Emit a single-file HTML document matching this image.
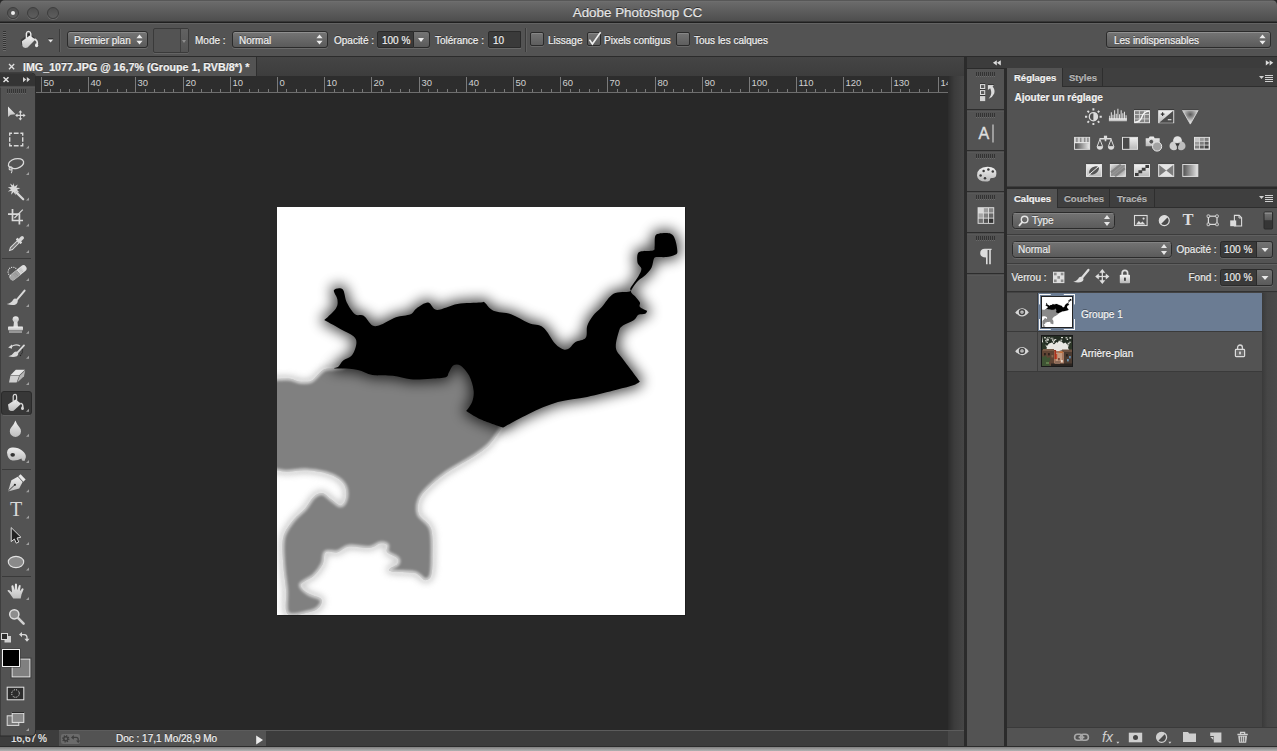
<!DOCTYPE html>
<html lang="fr">
<head>
<meta charset="utf-8">
<title>Adobe Photoshop CC</title>
<style>
*{box-sizing:border-box;margin:0;padding:0}
html,body{width:1277px;height:751px;overflow:hidden;background:#282828}
body{position:relative;font-family:"Liberation Sans",sans-serif;font-size:10px;color:#ececec}
.a{position:absolute}
.t{position:absolute;white-space:nowrap;font-size:10px;line-height:14px;color:#f0f0f0;text-shadow:0 -1px 0 rgba(0,0,0,.4);-webkit-text-stroke:.2px #f0f0f0}
#title{left:0;top:0;width:1277px;height:23px;background:linear-gradient(#3c3c3c 0,#727272 1px,#6a6a6a 2px,#5e5e5e 10px,#4e4e4e 21px,#1f1f1f 22px);border-radius:5px 5px 0 0}
#title .tt{left:-1px;width:1277px;top:4.7px;text-align:center;font-size:13.4px;line-height:16px;color:#e6e6e6;text-shadow:0 -1px 0 rgba(0,0,0,.5);-webkit-text-stroke:.2px #e6e6e6}
.tl{position:absolute;top:7px;width:12px;height:12px;border-radius:50%;background:linear-gradient(#4e4e4e,#5e5e5e);border:1px solid #3d3d3d;box-shadow:0 1px 0 rgba(255,255,255,.14)}
#opts{left:0;top:23px;width:1277px;height:34px;background:#535353;border-top:1px solid #636363;border-bottom:1px solid #2b2b2b}
.dd{position:absolute;height:17px;border:1px solid #2b2b2b;border-radius:3px;background:linear-gradient(#757575,#5a5a5a);box-shadow:0 1px 0 rgba(255,255,255,.14),inset 0 1px 0 rgba(255,255,255,.2)}
.dd .t{top:1.5px;left:6px}
.ud{position:absolute;right:4px;top:2px;width:7px;height:11px}
.inp{position:absolute;height:17px;border:1px solid #2a2a2a;border-radius:2px 0 0 2px;background:#3a3a3a;box-shadow:0 1px 0 rgba(255,255,255,.13)}
.inp .t{top:1.5px;left:4px}
.ab{position:absolute;height:17px;width:16px;border:1px solid #2a2a2a;border-left:0;border-radius:0 3px 3px 0;background:linear-gradient(#757575,#5a5a5a);box-shadow:0 1px 0 rgba(255,255,255,.13)}
.ab:after{content:"";position:absolute;left:4px;top:6px;border:3.5px solid transparent;border-top:4px solid #ececec;border-bottom:0}
.cb{position:absolute;width:14px;height:14px;border:1px solid #2b2b2b;border-radius:2px;background:linear-gradient(#747474,#5e5e5e);box-shadow:0 1px 0 rgba(255,255,255,.13),inset 0 1px 0 rgba(255,255,255,.15)}
.vsep{position:absolute;width:2px;border-left:1px solid #3a3a3a;border-right:1px solid #606060}
#tabs{left:0;top:57px;width:965px;height:19px;background:linear-gradient(#454545,#3d3d3d)}
#tab1{left:0;top:0;width:257px;height:19px;background:#535353;border-right:1px solid #2e2e2e}
#cv{left:36px;top:93px;width:912px;height:637px;background:#282828}
#gap{left:948px;top:76px;width:16px;height:654px;background:linear-gradient(90deg,#2c2c2c,#3c3c3c 40%,#464646)}
#status{left:0;top:730px;width:965px;height:17px;background:#535353;border-top:1px solid #5c5c5c}
#botline{left:0;top:746px;width:1277px;height:5px;background:linear-gradient(#2c2c2c 0,#2c2c2c 1px,#858585 1.5px,#b2b2b2 100%)}
</style>
</head>
<body>
<div id="title" class="a">
  <div class="tl" style="left:7px"></div><div class="tl" style="left:27px"></div><div class="tl" style="left:47px"></div>
  <div class="a" style="left:11px;top:11px;width:4px;height:4px;border-radius:50%;background:#eee"></div>
  <div class="t tt">Adobe Photoshop CC</div>
</div>

<div id="opts" class="a">
  <svg class="a" style="left:0;top:0" width="70" height="34" viewBox="0 23 70 34">
    <path d="M3,30.5h3M3,32.5h3M3,34.5h3M3,36.5h3M3,38.5h3M3,40.5h3M3,42.5h3M3,44.5h3M3,46.5h3M3,48.5h3" stroke="#333" stroke-width="1"/>
    <path d="M3,31.5h3M3,33.5h3M3,35.5h3M3,37.5h3M3,39.5h3M3,41.5h3M3,43.5h3M3,45.5h3M3,47.5h3M3,49.5h3" stroke="#6a6a6a" stroke-width="1"/>
    <defs><linearGradient id="ob" x1="0" y1="0" x2="0" y2="1"><stop offset="0" stop-color="#f2f2f2"/><stop offset="1" stop-color="#c4c4c4"/></linearGradient></defs>
    <path d="M21.4,39.6L29.6,33.6L35.2,37.4L27.6,45.6Q23.6,46.6 22,44Z" fill="#2a2a2a" opacity=".6" transform="translate(-.6 -.8)"/>
    <path d="M21.9,40.2L29.8,34.6L35.4,38.4L27.6,46.6Q23.8,47.8 22.4,45Z" fill="url(#ob)"/>
    <path d="M26.4,37.6V32.4Q26.8,30.4 28.6,30.4Q30.6,30.6 30.8,32.8V39.4" fill="none" stroke="#ececec" stroke-width="1.4"/>
    <path d="M27.4,33.4l2,-1.2v2.4z" fill="#222"/>
    <path d="M34.6,38Q37.6,39.4 37.4,43" fill="none" stroke="#e4e4e4" stroke-width="1.5"/><ellipse cx="36.6" cy="44.2" rx="1.6" ry="2" fill="#e8e8e8"/>
    <path d="M48,38.4h5.2l-2.6,3.2z" fill="#e6e6e6"/><path d="M48,37.6h5.2" stroke="#333" stroke-width="1"/>
    <path d="M59.5,28V51" stroke="#3a3a3a" stroke-width="1"/><path d="M60.5,28V51" stroke="#5e5e5e" stroke-width="1"/>
  </svg>
  <div class="dd" style="left:67px;top:7px;width:81px"><span class="t">Premier plan</span><svg class="ud" viewBox="0 0 7 11"><path d="M.4,4.2L3.5,.4L6.6,4.2zM.4,6.8L3.5,10.6L6.6,6.8z" fill="#ececec"/></svg></div>
  <div class="a" style="left:153px;top:4px;width:36px;height:25px;border:1px solid #3a3a3a;border-radius:2px;box-shadow:0 1px 0 rgba(255,255,255,.1)"><div class="a" style="left:26px;top:0;width:1px;height:23px;background:#3f3f3f"></div><div class="a" style="left:27px;top:0;width:7px;height:23px;background:linear-gradient(#626262,#545454)"></div><div class="a" style="left:28px;top:11px;border:2.5px solid transparent;border-top:3px solid #8e8e8e;border-bottom:0"></div></div>
  <div class="t" style="left:195px;top:10px">Mode :</div>
  <div class="dd" style="left:232px;top:7px;width:96px"><span class="t">Normal</span><svg class="ud" viewBox="0 0 7 11"><path d="M.4,4.2L3.5,.4L6.6,4.2zM.4,6.8L3.5,10.6L6.6,6.8z" fill="#ececec"/></svg></div>
  <div class="t" style="left:334px;top:10px">Opacité :</div>
  <div class="inp" style="left:377px;top:7px;width:37px"><span class="t">100 %</span></div><div class="ab" style="left:414px;top:7px"></div>
  <div class="t" style="left:435px;top:10px">Tolérance :</div>
  <div class="inp" style="left:488px;top:7px;width:33px"><span class="t">10</span></div>
  <div class="vsep" style="left:525px;top:4px;height:24px"></div>
  <div class="cb" style="left:530px;top:8px"></div><div class="t" style="left:548px;top:10px">Lissage</div>
  <div class="cb" style="left:587px;top:8px"></div><svg class="a" style="left:586px;top:5px" width="18" height="18" viewBox="586 28 18 18"><path d="M589.4,38.6L592.4,43L600.6,31.2" fill="none" stroke="#f0f0f0" stroke-width="1.6"/></svg><div class="t" style="left:604px;top:10px">Pixels contigus</div>
  <div class="cb" style="left:676px;top:8px"></div><div class="t" style="left:694px;top:10px">Tous les calques</div>
  <div class="dd" style="left:1106px;top:7px;width:165px"><span class="t" style="left:7px">Les indispensables</span><svg class="ud" viewBox="0 0 7 11"><path d="M.4,4.2L3.5,.4L6.6,4.2zM.4,6.8L3.5,10.6L6.6,6.8z" fill="#ececec"/></svg></div>
</div>

<div id="tabs" class="a">
  <div id="tab1" class="a"><svg class="a" style="left:8px;top:6px" width="8" height="8" viewBox="0 0 8 8"><path d="M1,1L6.2,6.2M6.2,1L1,6.2" stroke="#e0e0e0" stroke-width="1.3"/></svg><div class="t" style="left:23px;top:3px;font-weight:bold;font-size:10.7px">IMG_1077.JPG @ 16,7% (Groupe 1, RVB/8*) *</div></div>
</div>

<div id="cv" class="a"></div>
<div id="gap" class="a"></div>
<div id="status" class="a">
  <div class="a" style="left:266px;top:0;width:682px;height:17px;background:#3c3c3c"></div>
  <div class="a" style="left:948px;top:0;width:16px;height:17px;background:#484848"></div>
  <div class="a" style="left:0;top:-1px;width:59px;height:17px;background:#3d3d3d"></div>
  <div class="t" style="left:11px;top:.5px">16,67</div><div class="t" style="left:38px;top:.5px">%</div>
  <div class="a" style="left:61px;top:3px;width:19px;height:10px;background:#6b6b6b;border-radius:2px"></div>
  <svg class="a" style="left:59px;top:0" width="24" height="15" viewBox="59 731 24 15"><circle cx="65.8" cy="738.8" r="2.7" fill="none" stroke="#3e3e3e" stroke-width="2" stroke-dasharray="1.1 1"/><circle cx="65.8" cy="738.8" r="2" fill="none" stroke="#3e3e3e" stroke-width="1.4"/><path d="M73,737.4h3.2q2,0 2,2v1.4" fill="none" stroke="#3e3e3e" stroke-width="1.3"/><path d="M71,737.4l2.8,-2.4v4.8zM78.2,743l-2.2,-2.6h4.4z" fill="#3e3e3e"/></svg>
  <div class="t" style="left:116px;top:1px">Doc : 17,1 Mo/28,9 Mo</div>
  <svg class="a" style="left:255px;top:4px" width="9" height="10" viewBox="0 0 9 10"><path d="M1.2,.6L8,5L1.2,9.4Z" fill="#ececec"/></svg>
</div>
<!--RULER:s--><svg class="a" style="left:36px;top:76px" width="912" height="17" viewBox="36 76 912 17"><rect x="36" y="76" width="912" height="17" fill="#2d2d2d"/><rect x="36" y="92" width="912" height="1" fill="#6e6e6e"/><path d="M41.5,77V92M50.5,89V92M60.5,89V92M69.5,89V92M79.5,89V92M88.5,77V92M98.5,89V92M107.5,89V92M117.5,89V92M126.5,89V92M135.5,77V92M145.5,89V92M154.5,89V92M164.5,89V92M173.5,89V92M183.5,77V92M192.5,89V92M201.5,89V92M211.5,89V92M220.5,89V92M230.5,77V92M239.5,89V92M249.5,89V92M258.5,89V92M268.5,89V92M277.5,77V92M286.5,89V92M296.5,89V92M305.5,89V92M315.5,89V92M324.5,77V92M334.5,89V92M343.5,89V92M353.5,89V92M362.5,89V92M371.5,77V92M381.5,89V92M390.5,89V92M400.5,89V92M409.5,89V92M419.5,77V92M428.5,89V92M437.5,89V92M447.5,89V92M456.5,89V92M466.5,77V92M475.5,89V92M485.5,89V92M494.5,89V92M504.5,89V92M513.5,77V92M522.5,89V92M532.5,89V92M541.5,89V92M551.5,89V92M560.5,77V92M570.5,89V92M579.5,89V92M589.5,89V92M598.5,89V92M607.5,77V92M617.5,89V92M626.5,89V92M636.5,89V92M645.5,89V92M655.5,77V92M664.5,89V92M673.5,89V92M683.5,89V92M692.5,89V92M702.5,77V92M711.5,89V92M721.5,89V92M730.5,89V92M740.5,89V92M749.5,77V92M758.5,89V92M768.5,89V92M777.5,89V92M787.5,89V92M796.5,77V92M806.5,89V92M815.5,89V92M825.5,89V92M834.5,89V92M843.5,77V92M853.5,89V92M862.5,89V92M872.5,89V92M881.5,89V92M891.5,77V92M900.5,89V92M909.5,89V92M919.5,89V92M928.5,89V92M938.5,77V92" stroke="#7a7a7a" stroke-width="1" fill="none"/><text x="43.5" y="85.8" font-size="9.5" fill="#d0d0d0" font-family="Liberation Sans,sans-serif">50</text><text x="90.5" y="85.8" font-size="9.5" fill="#d0d0d0" font-family="Liberation Sans,sans-serif">40</text><text x="137.5" y="85.8" font-size="9.5" fill="#d0d0d0" font-family="Liberation Sans,sans-serif">30</text><text x="185.5" y="85.8" font-size="9.5" fill="#d0d0d0" font-family="Liberation Sans,sans-serif">20</text><text x="232.5" y="85.8" font-size="9.5" fill="#d0d0d0" font-family="Liberation Sans,sans-serif">10</text><text x="279.5" y="85.8" font-size="9.5" fill="#d0d0d0" font-family="Liberation Sans,sans-serif">0</text><text x="326.5" y="85.8" font-size="9.5" fill="#d0d0d0" font-family="Liberation Sans,sans-serif">10</text><text x="373.5" y="85.8" font-size="9.5" fill="#d0d0d0" font-family="Liberation Sans,sans-serif">20</text><text x="421.5" y="85.8" font-size="9.5" fill="#d0d0d0" font-family="Liberation Sans,sans-serif">30</text><text x="468.5" y="85.8" font-size="9.5" fill="#d0d0d0" font-family="Liberation Sans,sans-serif">40</text><text x="515.5" y="85.8" font-size="9.5" fill="#d0d0d0" font-family="Liberation Sans,sans-serif">50</text><text x="562.5" y="85.8" font-size="9.5" fill="#d0d0d0" font-family="Liberation Sans,sans-serif">60</text><text x="609.5" y="85.8" font-size="9.5" fill="#d0d0d0" font-family="Liberation Sans,sans-serif">70</text><text x="657.5" y="85.8" font-size="9.5" fill="#d0d0d0" font-family="Liberation Sans,sans-serif">80</text><text x="704.5" y="85.8" font-size="9.5" fill="#d0d0d0" font-family="Liberation Sans,sans-serif">90</text><text x="751.5" y="85.8" font-size="9.5" fill="#d0d0d0" font-family="Liberation Sans,sans-serif">100</text><text x="798.5" y="85.8" font-size="9.5" fill="#d0d0d0" font-family="Liberation Sans,sans-serif">110</text><text x="845.5" y="85.8" font-size="9.5" fill="#d0d0d0" font-family="Liberation Sans,sans-serif">120</text><text x="893.5" y="85.8" font-size="9.5" fill="#d0d0d0" font-family="Liberation Sans,sans-serif">130</text><text x="940.5" y="85.8" font-size="9.5" fill="#d0d0d0" font-family="Liberation Sans,sans-serif">140</text></svg><!--RULER:e-->
<div class="a" style="left:278px;top:208px;width:408px;height:408px;background:#1e1e1e"></div>
<!--ART:s--><svg class="a" style="left:277px;top:207px" width="408" height="408" viewBox="277 207 408 408">
<defs>
<filter id="b3" x="-20%" y="-20%" width="140%" height="140%"><feGaussianBlur stdDeviation="3"/></filter>
<filter id="b4" x="-20%" y="-20%" width="140%" height="140%"><feGaussianBlur stdDeviation="6.5"/></filter>
<filter id="b4g" x="-20%" y="-20%" width="140%" height="140%"><feGaussianBlur stdDeviation="3.6"/></filter>
<filter id="b2" x="-20%" y="-20%" width="140%" height="140%"><feGaussianBlur stdDeviation="1.6"/></filter>
<filter id="b1" x="-20%" y="-20%" width="140%" height="140%"><feGaussianBlur stdDeviation="0.7"/></filter>
</defs>
<rect x="277" y="207" width="408" height="408" fill="#fff"/>
<path d="M240.0,378.7C244.2,363.4 258.5,378.7 265.0,378.7C271.5,378.7 274.8,378.7 279.0,378.7C283.2,378.7 287.1,378.2 290.5,378.7C293.9,379.2 295.9,381.2 299.3,381.6C302.7,382.0 308.1,382.0 311.0,381.0C313.9,380.0 314.7,377.8 316.9,375.8C319.1,373.9 321.5,370.5 324.2,369.3C326.9,368.1 329.9,368.8 333.0,368.5C336.1,368.2 339.5,368.1 343.0,367.4C346.5,366.6 332.8,365.2 354.0,364.0C375.2,362.8 444.0,351.5 470.0,360.0C496.0,368.5 504.7,403.8 510.0,415.0C515.3,426.2 505.3,422.5 502.0,427.3C498.7,432.1 494.5,439.2 490.0,443.9C485.5,448.6 482.4,450.8 475.0,455.7C467.6,460.6 453.6,467.8 445.8,473.2C438.0,478.6 432.6,483.5 428.2,487.9C423.8,492.3 421.0,495.2 419.4,499.6C417.8,504.0 416.9,509.3 418.8,514.2C420.8,519.1 428.8,521.6 431.1,528.9C433.4,536.2 432.6,550.4 432.6,558.2C432.6,566.0 432.3,572.1 431.1,575.8C429.9,579.5 427.2,580.2 425.3,580.2C423.4,580.2 421.4,577.0 419.4,575.8C417.4,574.6 418.1,573.5 413.5,572.8C408.9,572.1 395.5,572.1 391.6,571.4C387.7,570.7 389.1,569.6 390.1,568.4C391.1,567.2 396.2,565.7 397.4,564.0C398.6,562.3 399.1,560.2 397.4,558.2C395.7,556.2 388.9,554.5 387.2,552.3C385.5,550.1 388.4,546.5 387.2,545.0C386.0,543.5 382.8,543.0 379.9,543.5C377.0,544.0 374.7,547.4 369.6,547.9C364.5,548.4 354.5,545.8 349.1,546.5C343.7,547.2 341.3,551.3 337.4,552.3C333.5,553.3 328.1,550.3 325.7,552.3C323.2,554.2 324.7,560.1 322.7,564.0C320.7,567.9 317.5,572.4 313.9,575.8C310.2,579.2 301.8,581.7 300.8,584.6C299.8,587.5 304.7,590.9 308.1,593.3C311.5,595.7 319.6,596.8 321.3,599.2C323.0,601.7 320.5,605.8 318.3,608.0C316.1,610.2 313.2,611.4 308.1,612.4C303.0,613.4 291.3,617.6 287.6,613.9C283.9,610.2 286.8,598.7 286.1,590.4C285.4,582.1 283.7,572.8 283.2,564.0C282.7,555.2 281.5,545.0 283.2,537.7C284.9,530.4 289.7,525.0 293.4,520.1C297.1,515.2 301.8,512.3 305.2,508.4C308.6,504.5 311.0,499.2 313.9,496.7C316.8,494.2 319.8,492.7 322.7,493.2C325.6,493.7 328.6,497.6 331.5,499.6C334.4,501.7 337.9,505.5 340.3,505.5C342.7,505.5 344.7,502.5 345.6,499.6C346.5,496.7 346.7,491.3 345.6,487.9C344.5,484.5 342.1,481.6 338.8,479.1C335.5,476.7 331.3,474.7 325.7,473.2C320.1,471.7 311.5,470.5 305.2,470.3C298.9,470.1 292.3,471.8 287.6,471.8C282.9,471.9 280.8,470.9 277.0,470.6C273.2,470.4 271.2,470.4 265.0,470.3C258.8,470.2 244.2,485.6 240.0,470.3C235.8,455.0 235.8,394.0 240.0,378.7Z" fill="#808080" stroke="#808080" stroke-width="5" filter="url(#b4g)" opacity=".5"/>
<path d="M240.0,378.7C244.2,363.4 258.5,378.7 265.0,378.7C271.5,378.7 274.8,378.7 279.0,378.7C283.2,378.7 287.1,378.2 290.5,378.7C293.9,379.2 295.9,381.2 299.3,381.6C302.7,382.0 308.1,382.0 311.0,381.0C313.9,380.0 314.7,377.8 316.9,375.8C319.1,373.9 321.5,370.5 324.2,369.3C326.9,368.1 329.9,368.8 333.0,368.5C336.1,368.2 339.5,368.1 343.0,367.4C346.5,366.6 332.8,365.2 354.0,364.0C375.2,362.8 444.0,351.5 470.0,360.0C496.0,368.5 504.7,403.8 510.0,415.0C515.3,426.2 505.3,422.5 502.0,427.3C498.7,432.1 494.5,439.2 490.0,443.9C485.5,448.6 482.4,450.8 475.0,455.7C467.6,460.6 453.6,467.8 445.8,473.2C438.0,478.6 432.6,483.5 428.2,487.9C423.8,492.3 421.0,495.2 419.4,499.6C417.8,504.0 416.9,509.3 418.8,514.2C420.8,519.1 428.8,521.6 431.1,528.9C433.4,536.2 432.6,550.4 432.6,558.2C432.6,566.0 432.3,572.1 431.1,575.8C429.9,579.5 427.2,580.2 425.3,580.2C423.4,580.2 421.4,577.0 419.4,575.8C417.4,574.6 418.1,573.5 413.5,572.8C408.9,572.1 395.5,572.1 391.6,571.4C387.7,570.7 389.1,569.6 390.1,568.4C391.1,567.2 396.2,565.7 397.4,564.0C398.6,562.3 399.1,560.2 397.4,558.2C395.7,556.2 388.9,554.5 387.2,552.3C385.5,550.1 388.4,546.5 387.2,545.0C386.0,543.5 382.8,543.0 379.9,543.5C377.0,544.0 374.7,547.4 369.6,547.9C364.5,548.4 354.5,545.8 349.1,546.5C343.7,547.2 341.3,551.3 337.4,552.3C333.5,553.3 328.1,550.3 325.7,552.3C323.2,554.2 324.7,560.1 322.7,564.0C320.7,567.9 317.5,572.4 313.9,575.8C310.2,579.2 301.8,581.7 300.8,584.6C299.8,587.5 304.7,590.9 308.1,593.3C311.5,595.7 319.6,596.8 321.3,599.2C323.0,601.7 320.5,605.8 318.3,608.0C316.1,610.2 313.2,611.4 308.1,612.4C303.0,613.4 291.3,617.6 287.6,613.9C283.9,610.2 286.8,598.7 286.1,590.4C285.4,582.1 283.7,572.8 283.2,564.0C282.7,555.2 281.5,545.0 283.2,537.7C284.9,530.4 289.7,525.0 293.4,520.1C297.1,515.2 301.8,512.3 305.2,508.4C308.6,504.5 311.0,499.2 313.9,496.7C316.8,494.2 319.8,492.7 322.7,493.2C325.6,493.7 328.6,497.6 331.5,499.6C334.4,501.7 337.9,505.5 340.3,505.5C342.7,505.5 344.7,502.5 345.6,499.6C346.5,496.7 346.7,491.3 345.6,487.9C344.5,484.5 342.1,481.6 338.8,479.1C335.5,476.7 331.3,474.7 325.7,473.2C320.1,471.7 311.5,470.5 305.2,470.3C298.9,470.1 292.3,471.8 287.6,471.8C282.9,471.9 280.8,470.9 277.0,470.6C273.2,470.4 271.2,470.4 265.0,470.3C258.8,470.2 244.2,485.6 240.0,470.3C235.8,455.0 235.8,394.0 240.0,378.7Z" fill="#808080" filter="url(#b1)"/>
<clipPath id="gc"><path d="M240.0,378.7C244.2,363.4 258.5,378.7 265.0,378.7C271.5,378.7 274.8,378.7 279.0,378.7C283.2,378.7 287.1,378.2 290.5,378.7C293.9,379.2 295.9,381.2 299.3,381.6C302.7,382.0 308.1,382.0 311.0,381.0C313.9,380.0 314.7,377.8 316.9,375.8C319.1,373.9 321.5,370.5 324.2,369.3C326.9,368.1 329.9,368.8 333.0,368.5C336.1,368.2 339.5,368.1 343.0,367.4C346.5,366.6 332.8,365.2 354.0,364.0C375.2,362.8 444.0,351.5 470.0,360.0C496.0,368.5 504.7,403.8 510.0,415.0C515.3,426.2 505.3,422.5 502.0,427.3C498.7,432.1 494.5,439.2 490.0,443.9C485.5,448.6 482.4,450.8 475.0,455.7C467.6,460.6 453.6,467.8 445.8,473.2C438.0,478.6 432.6,483.5 428.2,487.9C423.8,492.3 421.0,495.2 419.4,499.6C417.8,504.0 416.9,509.3 418.8,514.2C420.8,519.1 428.8,521.6 431.1,528.9C433.4,536.2 432.6,550.4 432.6,558.2C432.6,566.0 432.3,572.1 431.1,575.8C429.9,579.5 427.2,580.2 425.3,580.2C423.4,580.2 421.4,577.0 419.4,575.8C417.4,574.6 418.1,573.5 413.5,572.8C408.9,572.1 395.5,572.1 391.6,571.4C387.7,570.7 389.1,569.6 390.1,568.4C391.1,567.2 396.2,565.7 397.4,564.0C398.6,562.3 399.1,560.2 397.4,558.2C395.7,556.2 388.9,554.5 387.2,552.3C385.5,550.1 388.4,546.5 387.2,545.0C386.0,543.5 382.8,543.0 379.9,543.5C377.0,544.0 374.7,547.4 369.6,547.9C364.5,548.4 354.5,545.8 349.1,546.5C343.7,547.2 341.3,551.3 337.4,552.3C333.5,553.3 328.1,550.3 325.7,552.3C323.2,554.2 324.7,560.1 322.7,564.0C320.7,567.9 317.5,572.4 313.9,575.8C310.2,579.2 301.8,581.7 300.8,584.6C299.8,587.5 304.7,590.9 308.1,593.3C311.5,595.7 319.6,596.8 321.3,599.2C323.0,601.7 320.5,605.8 318.3,608.0C316.1,610.2 313.2,611.4 308.1,612.4C303.0,613.4 291.3,617.6 287.6,613.9C283.9,610.2 286.8,598.7 286.1,590.4C285.4,582.1 283.7,572.8 283.2,564.0C282.7,555.2 281.5,545.0 283.2,537.7C284.9,530.4 289.7,525.0 293.4,520.1C297.1,515.2 301.8,512.3 305.2,508.4C308.6,504.5 311.0,499.2 313.9,496.7C316.8,494.2 319.8,492.7 322.7,493.2C325.6,493.7 328.6,497.6 331.5,499.6C334.4,501.7 337.9,505.5 340.3,505.5C342.7,505.5 344.7,502.5 345.6,499.6C346.5,496.7 346.7,491.3 345.6,487.9C344.5,484.5 342.1,481.6 338.8,479.1C335.5,476.7 331.3,474.7 325.7,473.2C320.1,471.7 311.5,470.5 305.2,470.3C298.9,470.1 292.3,471.8 287.6,471.8C282.9,471.9 280.8,470.9 277.0,470.6C273.2,470.4 271.2,470.4 265.0,470.3C258.8,470.2 244.2,485.6 240.0,470.3C235.8,455.0 235.8,394.0 240.0,378.7Z"/></clipPath>
<g clip-path="url(#gc)"><path d="M240.0,378.7C244.2,363.4 258.5,378.7 265.0,378.7C271.5,378.7 274.8,378.7 279.0,378.7C283.2,378.7 287.1,378.2 290.5,378.7C293.9,379.2 295.9,381.2 299.3,381.6C302.7,382.0 308.1,382.0 311.0,381.0C313.9,380.0 314.7,377.8 316.9,375.8C319.1,373.9 321.5,370.5 324.2,369.3C326.9,368.1 329.9,368.8 333.0,368.5C336.1,368.2 339.5,368.1 343.0,367.4C346.5,366.6 332.8,365.2 354.0,364.0C375.2,362.8 444.0,351.5 470.0,360.0C496.0,368.5 504.7,403.8 510.0,415.0C515.3,426.2 505.3,422.5 502.0,427.3C498.7,432.1 494.5,439.2 490.0,443.9C485.5,448.6 482.4,450.8 475.0,455.7C467.6,460.6 453.6,467.8 445.8,473.2C438.0,478.6 432.6,483.5 428.2,487.9C423.8,492.3 421.0,495.2 419.4,499.6C417.8,504.0 416.9,509.3 418.8,514.2C420.8,519.1 428.8,521.6 431.1,528.9C433.4,536.2 432.6,550.4 432.6,558.2C432.6,566.0 432.3,572.1 431.1,575.8C429.9,579.5 427.2,580.2 425.3,580.2C423.4,580.2 421.4,577.0 419.4,575.8C417.4,574.6 418.1,573.5 413.5,572.8C408.9,572.1 395.5,572.1 391.6,571.4C387.7,570.7 389.1,569.6 390.1,568.4C391.1,567.2 396.2,565.7 397.4,564.0C398.6,562.3 399.1,560.2 397.4,558.2C395.7,556.2 388.9,554.5 387.2,552.3C385.5,550.1 388.4,546.5 387.2,545.0C386.0,543.5 382.8,543.0 379.9,543.5C377.0,544.0 374.7,547.4 369.6,547.9C364.5,548.4 354.5,545.8 349.1,546.5C343.7,547.2 341.3,551.3 337.4,552.3C333.5,553.3 328.1,550.3 325.7,552.3C323.2,554.2 324.7,560.1 322.7,564.0C320.7,567.9 317.5,572.4 313.9,575.8C310.2,579.2 301.8,581.7 300.8,584.6C299.8,587.5 304.7,590.9 308.1,593.3C311.5,595.7 319.6,596.8 321.3,599.2C323.0,601.7 320.5,605.8 318.3,608.0C316.1,610.2 313.2,611.4 308.1,612.4C303.0,613.4 291.3,617.6 287.6,613.9C283.9,610.2 286.8,598.7 286.1,590.4C285.4,582.1 283.7,572.8 283.2,564.0C282.7,555.2 281.5,545.0 283.2,537.7C284.9,530.4 289.7,525.0 293.4,520.1C297.1,515.2 301.8,512.3 305.2,508.4C308.6,504.5 311.0,499.2 313.9,496.7C316.8,494.2 319.8,492.7 322.7,493.2C325.6,493.7 328.6,497.6 331.5,499.6C334.4,501.7 337.9,505.5 340.3,505.5C342.7,505.5 344.7,502.5 345.6,499.6C346.5,496.7 346.7,491.3 345.6,487.9C344.5,484.5 342.1,481.6 338.8,479.1C335.5,476.7 331.3,474.7 325.7,473.2C320.1,471.7 311.5,470.5 305.2,470.3C298.9,470.1 292.3,471.8 287.6,471.8C282.9,471.9 280.8,470.9 277.0,470.6C273.2,470.4 271.2,470.4 265.0,470.3C258.8,470.2 244.2,485.6 240.0,470.3C235.8,455.0 235.8,394.0 240.0,378.7Z" fill="none" stroke="#fff" stroke-width="4" filter="url(#b2)" opacity=".4"/></g>
<path d="M240.0,378.7C244.2,363.4 258.5,378.7 265.0,378.7C271.5,378.7 274.8,378.7 279.0,378.7C283.2,378.7 287.1,378.2 290.5,378.7C293.9,379.2 295.9,381.2 299.3,381.6C302.7,382.0 308.1,382.0 311.0,381.0C313.9,380.0 314.7,377.8 316.9,375.8C319.1,373.9 321.5,370.5 324.2,369.3C326.9,368.1 329.9,368.8 333.0,368.5C336.1,368.2 339.5,368.1 343.0,367.4C346.5,366.6 332.8,365.2 354.0,364.0C375.2,362.8 444.0,351.5 470.0,360.0C496.0,368.5 504.7,403.8 510.0,415.0C515.3,426.2 505.3,422.5 502.0,427.3C498.7,432.1 494.5,439.2 490.0,443.9C485.5,448.6 482.4,450.8 475.0,455.7C467.6,460.6 453.6,467.8 445.8,473.2C438.0,478.6 432.6,483.5 428.2,487.9C423.8,492.3 421.0,495.2 419.4,499.6C417.8,504.0 416.9,509.3 418.8,514.2C420.8,519.1 428.8,521.6 431.1,528.9C433.4,536.2 432.6,550.4 432.6,558.2C432.6,566.0 432.3,572.1 431.1,575.8C429.9,579.5 427.2,580.2 425.3,580.2C423.4,580.2 421.4,577.0 419.4,575.8C417.4,574.6 418.1,573.5 413.5,572.8C408.9,572.1 395.5,572.1 391.6,571.4C387.7,570.7 389.1,569.6 390.1,568.4C391.1,567.2 396.2,565.7 397.4,564.0C398.6,562.3 399.1,560.2 397.4,558.2C395.7,556.2 388.9,554.5 387.2,552.3C385.5,550.1 388.4,546.5 387.2,545.0C386.0,543.5 382.8,543.0 379.9,543.5C377.0,544.0 374.7,547.4 369.6,547.9C364.5,548.4 354.5,545.8 349.1,546.5C343.7,547.2 341.3,551.3 337.4,552.3C333.5,553.3 328.1,550.3 325.7,552.3C323.2,554.2 324.7,560.1 322.7,564.0C320.7,567.9 317.5,572.4 313.9,575.8C310.2,579.2 301.8,581.7 300.8,584.6C299.8,587.5 304.7,590.9 308.1,593.3C311.5,595.7 319.6,596.8 321.3,599.2C323.0,601.7 320.5,605.8 318.3,608.0C316.1,610.2 313.2,611.4 308.1,612.4C303.0,613.4 291.3,617.6 287.6,613.9C283.9,610.2 286.8,598.7 286.1,590.4C285.4,582.1 283.7,572.8 283.2,564.0C282.7,555.2 281.5,545.0 283.2,537.7C284.9,530.4 289.7,525.0 293.4,520.1C297.1,515.2 301.8,512.3 305.2,508.4C308.6,504.5 311.0,499.2 313.9,496.7C316.8,494.2 319.8,492.7 322.7,493.2C325.6,493.7 328.6,497.6 331.5,499.6C334.4,501.7 337.9,505.5 340.3,505.5C342.7,505.5 344.7,502.5 345.6,499.6C346.5,496.7 346.7,491.3 345.6,487.9C344.5,484.5 342.1,481.6 338.8,479.1C335.5,476.7 331.3,474.7 325.7,473.2C320.1,471.7 311.5,470.5 305.2,470.3C298.9,470.1 292.3,471.8 287.6,471.8C282.9,471.9 280.8,470.9 277.0,470.6C273.2,470.4 271.2,470.4 265.0,470.3C258.8,470.2 244.2,485.6 240.0,470.3C235.8,455.0 235.8,394.0 240.0,378.7Z" fill="none" stroke="#fff" stroke-width="1.6" filter="url(#b2)" opacity=".75"/>
<path d="M333.9,290.2C334.8,288.5 340.5,287.2 342.6,289.3C344.8,291.4 344.7,298.4 346.8,302.5C348.9,306.6 352.2,312.0 355.0,314.2C357.8,316.4 360.8,313.8 363.7,315.7C366.6,317.6 369.6,323.9 372.5,325.4C375.4,326.9 377.4,325.9 381.3,324.5C385.2,323.1 391.1,318.9 396.0,317.2C400.9,315.5 407.2,315.7 410.6,314.2C414.0,312.7 413.6,310.3 416.5,308.4C419.4,306.4 424.8,302.2 428.2,302.5C431.6,302.8 432.1,309.6 437.0,309.9C441.9,310.1 450.2,305.2 457.5,304.0C464.8,302.8 476.4,302.8 480.9,302.5C485.4,302.2 482.5,301.1 484.6,302.5C486.7,303.9 489.0,308.8 493.4,310.7C497.8,312.6 505.1,312.1 511.0,314.2C516.9,316.2 523.2,320.8 528.6,323.0C534.0,325.2 538.8,324.0 543.2,327.4C547.6,330.8 551.6,339.8 555.0,343.5C558.4,347.2 561.3,348.7 563.7,349.4C566.1,350.1 567.6,349.1 569.6,347.9C571.6,346.7 572.8,343.8 575.5,342.1C578.2,340.4 583.8,340.4 585.7,337.7C587.7,335.0 586.0,329.7 587.2,326.0C588.4,322.3 590.6,318.9 593.0,315.7C595.4,312.5 598.4,310.6 601.8,306.9C605.2,303.2 608.9,296.3 613.5,293.7C618.1,291.1 626.9,292.4 629.7,291.4C632.5,290.4 629.0,290.4 630.5,287.9C632.0,285.4 636.6,279.4 638.4,276.2C640.2,273.0 641.5,271.0 641.4,268.8C641.3,266.6 638.2,265.4 637.6,263.0C637.0,260.6 637.0,256.1 637.6,254.2C638.2,252.2 638.8,251.9 641.4,251.3C644.0,250.7 650.9,251.1 653.1,250.4C655.3,249.7 654.3,249.2 654.6,246.9C654.9,244.6 654.4,238.8 655.1,236.6C655.8,234.4 656.3,234.2 658.9,233.7C661.5,233.2 668.0,232.7 670.7,233.7C673.4,234.7 674.0,236.6 675.1,239.5C676.2,242.4 677.4,248.8 677.4,251.3C677.4,253.9 677.0,253.8 675.1,254.8C673.2,255.8 669.2,256.7 666.3,257.1C663.4,257.5 659.5,256.9 657.5,257.1C655.5,257.4 655.0,256.9 654.0,258.6C653.0,260.3 653.0,264.7 651.6,267.4C650.2,270.1 648.0,272.5 645.8,274.7C643.6,276.9 640.6,278.4 638.4,280.6C636.2,282.8 633.8,285.9 632.6,287.9C631.4,289.8 630.6,290.8 631.1,292.3C631.6,293.8 634.0,295.0 635.5,296.7C637.0,298.4 639.2,300.8 639.9,302.5C640.6,304.2 638.7,305.5 639.9,306.9C641.1,308.3 647.2,310.7 647.2,310.7C647.2,310.7 646.7,313.0 645.2,313.7C643.7,314.4 640.3,313.7 638.4,314.8C636.5,315.9 636.7,318.2 634.0,320.1C631.3,322.0 624.8,324.1 622.3,326.0C619.8,327.9 619.9,328.2 618.8,331.8C617.7,335.4 615.3,343.5 615.9,347.9C616.5,352.3 619.8,354.5 622.3,358.2C624.8,361.9 628.2,366.0 631.1,369.9C634.0,373.8 639.9,381.6 639.9,381.6C639.9,381.6 637.9,383.7 634.0,385.1C630.1,386.5 624.3,387.8 616.5,389.8C608.7,391.8 597.0,394.8 587.2,396.9C577.4,398.9 567.7,399.3 557.9,402.1C548.1,404.9 537.8,409.6 528.6,413.9C519.5,418.1 503.0,427.6 503.0,427.6C503.0,427.6 487.1,422.3 481.0,419.5C474.9,416.7 466.3,410.9 466.3,410.9C466.3,410.9 470.9,405.5 472.1,402.1C473.3,398.7 474.1,394.8 473.6,390.4C473.1,386.0 471.4,379.9 469.2,375.8C467.0,371.7 463.1,367.2 460.4,365.5C457.7,363.8 455.1,364.3 453.1,365.5C451.2,366.7 449.9,370.9 448.7,372.8C447.5,374.8 448.8,376.2 445.8,377.2C442.9,378.2 436.9,378.3 431.0,378.7C425.1,379.1 416.9,379.8 410.6,379.3C404.3,378.8 399.4,376.5 393.0,375.8C386.6,375.1 378.4,375.9 372.5,374.9C366.6,373.9 363.0,370.9 357.9,369.9C352.8,368.8 346.0,368.9 342.0,368.6C338.0,368.3 334.6,368.6 334.0,368.2C333.4,367.8 337.0,367.7 338.5,366.4C340.0,365.1 340.9,362.4 343.2,360.5C345.4,358.6 349.8,358.1 352.0,355.3C354.2,352.5 356.1,346.7 356.4,343.5C356.6,340.3 356.2,338.6 353.5,336.2C350.8,333.8 345.2,331.6 340.3,328.9C335.4,326.2 324.2,320.1 324.2,320.1C324.2,320.1 333.7,311.8 335.9,308.4C338.1,305.0 337.7,302.6 337.4,299.6C337.1,296.6 333.0,291.9 333.9,290.2Z" fill="#000" stroke="#000" stroke-width="7" stroke-linejoin="round" filter="url(#b4)" opacity=".7"/>
<path d="M333.9,290.2C334.8,288.5 340.5,287.2 342.6,289.3C344.8,291.4 344.7,298.4 346.8,302.5C348.9,306.6 352.2,312.0 355.0,314.2C357.8,316.4 360.8,313.8 363.7,315.7C366.6,317.6 369.6,323.9 372.5,325.4C375.4,326.9 377.4,325.9 381.3,324.5C385.2,323.1 391.1,318.9 396.0,317.2C400.9,315.5 407.2,315.7 410.6,314.2C414.0,312.7 413.6,310.3 416.5,308.4C419.4,306.4 424.8,302.2 428.2,302.5C431.6,302.8 432.1,309.6 437.0,309.9C441.9,310.1 450.2,305.2 457.5,304.0C464.8,302.8 476.4,302.8 480.9,302.5C485.4,302.2 482.5,301.1 484.6,302.5C486.7,303.9 489.0,308.8 493.4,310.7C497.8,312.6 505.1,312.1 511.0,314.2C516.9,316.2 523.2,320.8 528.6,323.0C534.0,325.2 538.8,324.0 543.2,327.4C547.6,330.8 551.6,339.8 555.0,343.5C558.4,347.2 561.3,348.7 563.7,349.4C566.1,350.1 567.6,349.1 569.6,347.9C571.6,346.7 572.8,343.8 575.5,342.1C578.2,340.4 583.8,340.4 585.7,337.7C587.7,335.0 586.0,329.7 587.2,326.0C588.4,322.3 590.6,318.9 593.0,315.7C595.4,312.5 598.4,310.6 601.8,306.9C605.2,303.2 608.9,296.3 613.5,293.7C618.1,291.1 626.9,292.4 629.7,291.4C632.5,290.4 629.0,290.4 630.5,287.9C632.0,285.4 636.6,279.4 638.4,276.2C640.2,273.0 641.5,271.0 641.4,268.8C641.3,266.6 638.2,265.4 637.6,263.0C637.0,260.6 637.0,256.1 637.6,254.2C638.2,252.2 638.8,251.9 641.4,251.3C644.0,250.7 650.9,251.1 653.1,250.4C655.3,249.7 654.3,249.2 654.6,246.9C654.9,244.6 654.4,238.8 655.1,236.6C655.8,234.4 656.3,234.2 658.9,233.7C661.5,233.2 668.0,232.7 670.7,233.7C673.4,234.7 674.0,236.6 675.1,239.5C676.2,242.4 677.4,248.8 677.4,251.3C677.4,253.9 677.0,253.8 675.1,254.8C673.2,255.8 669.2,256.7 666.3,257.1C663.4,257.5 659.5,256.9 657.5,257.1C655.5,257.4 655.0,256.9 654.0,258.6C653.0,260.3 653.0,264.7 651.6,267.4C650.2,270.1 648.0,272.5 645.8,274.7C643.6,276.9 640.6,278.4 638.4,280.6C636.2,282.8 633.8,285.9 632.6,287.9C631.4,289.8 630.6,290.8 631.1,292.3C631.6,293.8 634.0,295.0 635.5,296.7C637.0,298.4 639.2,300.8 639.9,302.5C640.6,304.2 638.7,305.5 639.9,306.9C641.1,308.3 647.2,310.7 647.2,310.7C647.2,310.7 646.7,313.0 645.2,313.7C643.7,314.4 640.3,313.7 638.4,314.8C636.5,315.9 636.7,318.2 634.0,320.1C631.3,322.0 624.8,324.1 622.3,326.0C619.8,327.9 619.9,328.2 618.8,331.8C617.7,335.4 615.3,343.5 615.9,347.9C616.5,352.3 619.8,354.5 622.3,358.2C624.8,361.9 628.2,366.0 631.1,369.9C634.0,373.8 639.9,381.6 639.9,381.6C639.9,381.6 637.9,383.7 634.0,385.1C630.1,386.5 624.3,387.8 616.5,389.8C608.7,391.8 597.0,394.8 587.2,396.9C577.4,398.9 567.7,399.3 557.9,402.1C548.1,404.9 537.8,409.6 528.6,413.9C519.5,418.1 503.0,427.6 503.0,427.6C503.0,427.6 487.1,422.3 481.0,419.5C474.9,416.7 466.3,410.9 466.3,410.9C466.3,410.9 470.9,405.5 472.1,402.1C473.3,398.7 474.1,394.8 473.6,390.4C473.1,386.0 471.4,379.9 469.2,375.8C467.0,371.7 463.1,367.2 460.4,365.5C457.7,363.8 455.1,364.3 453.1,365.5C451.2,366.7 449.9,370.9 448.7,372.8C447.5,374.8 448.8,376.2 445.8,377.2C442.9,378.2 436.9,378.3 431.0,378.7C425.1,379.1 416.9,379.8 410.6,379.3C404.3,378.8 399.4,376.5 393.0,375.8C386.6,375.1 378.4,375.9 372.5,374.9C366.6,373.9 363.0,370.9 357.9,369.9C352.8,368.8 346.0,368.9 342.0,368.6C338.0,368.3 334.6,368.6 334.0,368.2C333.4,367.8 337.0,367.7 338.5,366.4C340.0,365.1 340.9,362.4 343.2,360.5C345.4,358.6 349.8,358.1 352.0,355.3C354.2,352.5 356.1,346.7 356.4,343.5C356.6,340.3 356.2,338.6 353.5,336.2C350.8,333.8 345.2,331.6 340.3,328.9C335.4,326.2 324.2,320.1 324.2,320.1C324.2,320.1 333.7,311.8 335.9,308.4C338.1,305.0 337.7,302.6 337.4,299.6C337.1,296.6 333.0,291.9 333.9,290.2Z" fill="#000" filter="url(#b1)"/>
</svg><!--ART:e-->
<!--TOOLS:s--><svg class="a" style="left:0;top:72px" width="37" height="666" viewBox="0 72 37 666">
<defs><linearGradient id="lg" x1="0" y1="0" x2="0" y2="1"><stop offset="0" stop-color="#efefef"/><stop offset="1" stop-color="#bdbdbd"/></linearGradient></defs>
<path d="M0,73H31.5Q35.5,73 35.5,77V732Q35.5,736 31.5,736H0Z" fill="#535353" stroke="#2b2b2b" stroke-width="1"/>
<path d="M0,73.5H31.5Q35,73.5 35,77V85.5H0Z" fill="#343434"/><rect x="0" y="85.5" width="35" height="1" fill="#2a2a2a"/><rect x="0" y="86.5" width="35" height="1" fill="#5e5e5e"/>
<path d="M3.5,77.2L8.5,82M8.5,77.2L3.5,82" stroke="#e4e4e4" stroke-width="1.5" fill="none"/><path d="M23,77l3.2,2.6L23,82.2zM26.8,77l3.2,2.6L26.8,82.2z" fill="#d4d4d4"/>
<path d="M7.5,89v4M9.5,89v4M11.5,89v4M13.5,89v4M15.5,89v4M17.5,89v4M19.5,89v4M21.5,89v4M23.5,89v4M25.5,89v4" stroke="#353535" stroke-width="1"/><path d="M7,93.5H26" stroke="#666" stroke-width="1" stroke-dasharray="1 1"/>
<path d="M8,106.5V117L10.6,114.8L15.6,114.3Z" fill="url(#lg)"/><path d="M20.4,111.6v7.6M16.6,115.4h7.6" stroke="#d9d9d9" stroke-width="1.1" fill="none"/><path d="M20.4,110.2l1.9,2.3h-3.8zM20.4,120.6l1.9,-2.3h-3.8zM15.2,115.4l2.3,-1.9v3.800zM25.6,115.4l-2.3,-1.9v3.800z" fill="#d9d9d9"/>
<path d="M9.7,135.7V133.3H12M13.8,133.3H18.6M20.4,133.3H22.7V135.7M22.7,137.3V141.7M22.7,143.3V145.7H20.4M18.6,145.7H13.8M12,145.7H9.7V143.3M9.7,141.7V137.3" fill="none" stroke="#d9d9d9" stroke-width="1.4"/><path d="M26,148.5h3v-3z" fill="#a0a0a0"/><ellipse cx="16" cy="163.6" rx="7.8" ry="4.8" transform="rotate(-14 16 163.6)" fill="none" stroke="#d9d9d9" stroke-width="1.3"/><path d="M9,167.2q2.2,-1 3.2,0.6q.8,1.8 -1.6,2.1q-2,-.2 -1.2,-1.8M11.8,169.5q.8,2 -.6,3.6" fill="none" stroke="#d9d9d9" stroke-width="1.1"/><path d="M26,175h3v-3z" fill="#a0a0a0"/><path d="M13.3,183l1.2,3.6l3.2,-2.2l-1.3,3.4l3.9,.3l-3.4,1.6l2.6,2.9l-3.6,-1.2l-.3,3.9l-1.9,-3.4l-2.6,2.9l.6,-3.8l-3.9,.6l3.2,-2.3l-3.2,-2l3.8,-.3l-1.6,-3.4l3,2z" fill="#d9d9d9"/><path d="M16.5,192.6L23.2,199.3" stroke="#d9d9d9" stroke-width="2.2" stroke-linecap="round"/><path d="M26,200.5h3v-3z" fill="#a0a0a0"/><path d="M12.5,209V220.5H23M8,214.1H19.4V224.6" fill="none" stroke="#d9d9d9" stroke-width="1.7"/><path d="M22.8,209.6L14.4,218" stroke="#d9d9d9" stroke-width="1.2"/><path d="M26,226.6h3v-3z" fill="#a0a0a0"/><g transform="rotate(45 16 244)"><rect x="14.2" y="233.5" width="3.6" height="5.5" rx="1.7" fill="#d9d9d9"/><rect x="12.6" y="238.4" width="6.8" height="2.6" rx=".6" fill="#d9d9d9"/><path d="M14.6,241h2.8v9.5l-1.4,2.6l-1.4,-2.6z" fill="#777" stroke="#d9d9d9" stroke-width="1"/></g><path d="M26,253h3v-3z" fill="#a0a0a0"/><path d="M2,258.5H31" stroke="#3a3a3a" stroke-width="1"/><g transform="rotate(-39 18 272.7)"><rect x="8" y="269.6" width="20" height="6.4" rx="3.2" fill="#dedede"/><path d="M11.2,269.6H18.6V276H11.2A3.2,3.2 0 0 1 11.2,269.6Z" fill="#a6a6a6"/><path d="M13.6,271.4h9.6M13.6,272.9h9.6M13.6,274.4h9.6" stroke="#777" stroke-width=".8" stroke-dasharray=".8 1.4"/></g><path d="M10.6,276A4.7,4.7 0 1 1 16.2,268.6" fill="none" stroke="#f0f0f0" stroke-width="1.1" stroke-dasharray="1 1.1"/><path d="M26,281h3v-3z" fill="#a0a0a0"/><path d="M24.6,290.6L16.6,300.2" stroke="#d9d9d9" stroke-width="2" stroke-linecap="round"/><path d="M16.9,299.3q2,2.6 -.8,4.9q-3.6,1.8 -9.4,-.2q4.6,-.8 6.6,-4.6q1.6,-1.6 3.6,-.1z" fill="#d9d9d9"/><path d="M26,307h3v-3z" fill="#a0a0a0"/><circle cx="15.7" cy="319.3" r="3.1" fill="url(#lg)"/><path d="M14,321.5h3.4l.6,5.4h-4.6z" fill="#d9d9d9"/><rect x="8" y="326.6" width="15" height="3.8" rx=".8" fill="url(#lg)"/><rect x="9" y="331.5" width="13" height="1" fill="#d9d9d9"/><path d="M26,333.7h3v-3z" fill="#a0a0a0"/><path d="M24,345.4L17.4,352.6" stroke="#d9d9d9" stroke-width="1.8" stroke-linecap="round"/><path d="M17.6,352q1.6,2.2 -.8,4.2q-3.4,1.6 -8.4,0q4,-.8 5.8,-3.9q1.6,-1.4 3.4,-.3z" fill="#d9d9d9"/><path d="M10.5,347.2q4.6,-4 9.6,-1.2" fill="none" stroke="#d9d9d9" stroke-width="1.3"/><path d="M8.2,347.4l3.8,-3v4.4z" fill="#d9d9d9"/><path d="M22.3,349.5q1,3.6 -2.6,6.6" fill="none" stroke="#1e1e1e" stroke-width="1.2" stroke-dasharray="1 1"/><path d="M26,358.7h3v-3z" fill="#a0a0a0"/><path d="M15.8,369.8H25L19.2,375.2H10.4Z" fill="#e6e6e6"/><path d="M10.4,375.8H19.2L16.6,382.6H9Z" fill="#cfcfcf"/><path d="M19.9,375.6L25.2,370.6L24,376.2L17.3,382.4Z" fill="#b4b4b4"/><path d="M26,385h3v-3z" fill="#a0a0a0"/><rect x="1.5" y="391.5" width="30" height="23" rx="2.5" fill="#373737" stroke="#2a2a2a" stroke-width="1"/><path d="M3,415.3H30" stroke="#646464" stroke-width="1"/><path d="M8,404.6L15.6,399.6L21.2,403.8L13.6,410.8Q10,411.4 8.8,409.4Z" fill="url(#lg)"/><path d="M13.2,401.5V396.2Q13.6,394.3 15.2,394.4Q16.6,394.6 16.6,396.4V402.8" fill="none" stroke="#d9d9d9" stroke-width="1.2"/><path d="M20.6,403.2Q23.2,404 22.8,407" fill="none" stroke="#d9d9d9" stroke-width="1.3"/><ellipse cx="22.5" cy="408.2" rx="1.4" ry="1.9" fill="#d9d9d9"/><path d="M26,411.7h3v-3z" fill="#a0a0a0"/><path d="M15.4,420.5Q17,424.8 19.6,427.6A5.6,5.6 0 1 1 11.2,427.6Q13.8,424.8 15.4,420.5Z" fill="url(#lg)"/><path d="M26,436.7h3v-3z" fill="#a0a0a0"/><path d="M7,452.5Q7.4,448 12,447.5Q18,447 22,450.5Q26.5,454 25.8,457.5L24.5,461L22,460.5L21.5,458.5Q17,461 12.5,460.5Q7.5,459.5 7,452.5Z" fill="url(#lg)"/><ellipse cx="12.7" cy="454.8" rx="2.3" ry="1.9" fill="#333"/><path d="M26,463h3v-3z" fill="#a0a0a0"/><path d="M2,469.5H31" stroke="#3a3a3a" stroke-width="1"/><path d="M8,491.4L11.4,480.2L17.8,476.8L22.6,482L19.2,488.4Z" fill="url(#lg)"/><path d="M18.3,476.2L20.6,474.2L25.6,479.6L23.3,481.8Z" fill="#e8e8e8"/><path d="M8.3,491L14.6,485" stroke="#333" stroke-width=".9"/><circle cx="14.9" cy="484.8" r="1.1" fill="#2a2a2a"/><path d="M26,492.3h3v-3z" fill="#a0a0a0"/><text x="16.2" y="515.6" text-anchor="middle" font-family="Liberation Serif,serif" font-size="20" fill="#d9d9d9">T</text><path d="M26,518.4h3v-3z" fill="#a0a0a0"/><path d="M11.2,527.6V541.6L14.4,539L16.2,543.2L18.8,542L17,538L20.9,537.2Z" fill="#222" stroke="#d9d9d9" stroke-width="1" stroke-linejoin="miter"/><path d="M26,545h3v-3z" fill="#a0a0a0"/><ellipse cx="16" cy="562" rx="7.7" ry="5.6" fill="#8a8a8a" stroke="#e2e2e2" stroke-width="1.1"/><path d="M26,570.5h3v-3z" fill="#a0a0a0"/><path d="M2,576.5H31" stroke="#3a3a3a" stroke-width="1"/><path d="M13.3,598.6L9.6,593.2L7.4,590.8Q8.2,589.6 9.4,590.2L12.1,592.4L11.4,586Q12.2,584.8 13.3,585.6L14.6,590.2L15,584Q15.9,582.8 16.9,584L17.3,590.2L18.9,585.4Q19.9,584.4 20.7,585.6L19.9,591.2L22,588.4Q23.2,588 23.6,589.2L21.5,594.4L20.7,598.6Z" fill="url(#lg)"/><path d="M26,600h3v-3z" fill="#a0a0a0"/><circle cx="14.3" cy="614.3" r="4.6" fill="#8d8d8d" stroke="#dedede" stroke-width="1.5"/><path d="M18.2,618.2L23.6,623.6" stroke="#d0d0d0" stroke-width="2.6" stroke-linecap="round"/><rect x="4.5" y="636" width="6.5" height="6.5" fill="#cfcfcf"/><rect x="1.5" y="633.5" width="6" height="6" fill="#2c2c2c" stroke="#d8d8d8" stroke-width="1"/><path d="M21,634.6h3.4q2.6,.2 2.6,3v2.4" fill="none" stroke="#d9d9d9" stroke-width="1.3"/><path d="M19,634.6l3,-2.6v5.2zM27,641.8l-2.6,-3h5.2z" fill="#d9d9d9"/>
<rect x="12" y="659" width="18" height="18" fill="#808080" stroke="#f4f4f4" stroke-width="1"/><rect x="11" y="658" width="20" height="20" fill="none" stroke="#3a3a3a" stroke-width="1" opacity=".7"/><rect x="1.5" y="648.5" width="19" height="19" fill="#3a3a3a"/><rect x="2.5" y="649.5" width="17" height="17" fill="#000" stroke="#f4f4f4" stroke-width="1"/>
<rect x="7.2" y="687.2" width="16.6" height="12.6" fill="#2c2c2c" stroke="#e4e4e4" stroke-width="1"/><circle cx="15.5" cy="693.5" r="3.8" fill="none" stroke="#e8e8e8" stroke-width="1" stroke-dasharray="1 1"/><rect x="7.2" y="715.8" width="11.6" height="9.6" fill="#777" stroke="#dcdcdc" stroke-width="1"/><rect x="12.2" y="713.2" width="11.6" height="9.2" fill="#8a8a8a" stroke="#e4e4e4" stroke-width="1"/><rect x="12" y="712" width="12" height="1" fill="#2a2a2a"/><path d="M26,731h3v-3z" fill="#a0a0a0"/></svg><!--TOOLS:e-->

<!--RIGHT:s--><svg class="a" style="left:964px;top:57px" width="313" height="691" viewBox="964 57 313 691">
<defs><linearGradient id="dg" x1="0" y1="0" x2="0" y2="1"><stop offset="0" stop-color="#747474"/><stop offset="1" stop-color="#5a5a5a"/></linearGradient><linearGradient id="ig" x1="0" y1="0" x2="0" y2="1"><stop offset="0" stop-color="#f2f2f2"/><stop offset="1" stop-color="#b8b8b8"/></linearGradient><linearGradient id="hg" x1="0" y1="0" x2="1" y2="0"><stop offset="0" stop-color="#e8e8e8"/><stop offset="1" stop-color="#6a6a6a"/></linearGradient><linearGradient id="vg" x1="0" y1="0" x2="0" y2="1"><stop offset="0" stop-color="#e0e0e0"/><stop offset="1" stop-color="#6a6a6a"/></linearGradient><linearGradient id="sg" x1="0" y1="0" x2="1" y2="0"><stop offset="0" stop-color="#3a3a3a"/><stop offset=".35" stop-color="#464646"/><stop offset="1" stop-color="#4a4a4a"/></linearGradient><radialGradient id="rg" cx=".5" cy=".3" r=".55"><stop offset="0" stop-color="#5a5a5a"/><stop offset="1" stop-color="#dedede"/></radialGradient><linearGradient id="dg2" x1="0" y1="0" x2="1" y2="1"><stop offset="0" stop-color="#e8e8e8"/><stop offset=".5" stop-color="#8a8a8a"/><stop offset="1" stop-color="#e0e0e0"/></linearGradient></defs>
<rect x="964" y="57" width="313" height="691" fill="#2b2b2b"/><rect x="967" y="57" width="310" height="11" fill="#3c3c3c"/><rect x="967" y="69" width="37" height="678" fill="#535353"/><rect x="1007" y="69" width="270" height="678" fill="#535353"/>
<path d="M996.8,60.2v5.2l-3.9,-2.6zM1000.8,60.2v5.2l-3.9,-2.6z" fill="#dcdcdc"/><path d="M1265.8,60.2v5.2l3.7,-2.6zM1269.6,60.2v5.2l3.7,-2.6z" fill="#dcdcdc"/>
<rect x="967" y="109" width="37" height="1.5" fill="#2d2d2d"/><rect x="967" y="110.5" width="37" height="1" fill="#5f5f5f"/><rect x="967" y="150" width="37" height="1.5" fill="#2d2d2d"/><rect x="967" y="151.5" width="37" height="1" fill="#5f5f5f"/><rect x="967" y="191" width="37" height="1.5" fill="#2d2d2d"/><rect x="967" y="192.5" width="37" height="1" fill="#5f5f5f"/><rect x="967" y="232" width="37" height="1.5" fill="#2d2d2d"/><rect x="967" y="233.5" width="37" height="1" fill="#5f5f5f"/><rect x="967" y="273" width="37" height="1.5" fill="#2d2d2d"/><rect x="967" y="274.5" width="37" height="1" fill="#5f5f5f"/><path d="M976.5,72v4M978.5,72v4M980.5,72v4M982.5,72v4M984.5,72v4M986.5,72v4M988.5,72v4M990.5,72v4M992.5,72v4M994.5,72v4" stroke="#333" stroke-width="1"/><path d="M976,76.5h20" stroke="#696969" stroke-width="1" stroke-dasharray="1 1"/><path d="M976.5,113v4M978.5,113v4M980.5,113v4M982.5,113v4M984.5,113v4M986.5,113v4M988.5,113v4M990.5,113v4M992.5,113v4M994.5,113v4" stroke="#333" stroke-width="1"/><path d="M976,117.5h20" stroke="#696969" stroke-width="1" stroke-dasharray="1 1"/><path d="M976.5,154v4M978.5,154v4M980.5,154v4M982.5,154v4M984.5,154v4M986.5,154v4M988.5,154v4M990.5,154v4M992.5,154v4M994.5,154v4" stroke="#333" stroke-width="1"/><path d="M976,158.5h20" stroke="#696969" stroke-width="1" stroke-dasharray="1 1"/><path d="M976.5,195v4M978.5,195v4M980.5,195v4M982.5,195v4M984.5,195v4M986.5,195v4M988.5,195v4M990.5,195v4M992.5,195v4M994.5,195v4" stroke="#333" stroke-width="1"/><path d="M976,199.5h20" stroke="#696969" stroke-width="1" stroke-dasharray="1 1"/><path d="M976.5,236v4M978.5,236v4M980.5,236v4M982.5,236v4M984.5,236v4M986.5,236v4M988.5,236v4M990.5,236v4M992.5,236v4M994.5,236v4" stroke="#333" stroke-width="1"/><path d="M976,240.5h20" stroke="#696969" stroke-width="1" stroke-dasharray="1 1"/><path d="M980,83.6h5.2M980,89.6h5.2M980,95.6h5.2" stroke="#2c2c2c" stroke-width="1" opacity=".8"/><rect x="980.5" y="84.6" width="4.2" height="3.9" fill="#5a5a5a" stroke="#dcdcdc" stroke-width="1"/><rect x="980.5" y="90.6" width="4.2" height="3.9" fill="#5a5a5a" stroke="#dcdcdc" stroke-width="1"/><rect x="980" y="96.1" width="5.2" height="5" fill="#d4d4d4"/><path d="M987.9,85.1H993.9L992.6,86.4Q995.4,90 994.2,93.4Q992.8,97 988.6,98.8Q991.6,95 991.2,92Q991,90 990.2,88.2L987.9,90Z" fill="#dcdcdc"/><path d="M988,84.6h6" stroke="#2c2c2c" stroke-width="1" opacity=".7"/>
<text x="978.4" y="139.2" font-size="16" fill="#dedede" stroke="#dedede" stroke-width=".4" font-family="Liberation Sans,sans-serif">A</text><path d="M993,124.4V142.6" stroke="#dadada" stroke-width="1.1"/>
<path d="M977,175.5Q977,167.2 987.5,166.8Q996.4,167.2 996.4,173.4Q996.2,178.6 991.6,178Q989.6,178 990,179.8Q990,181.6 986,181.6Q977.4,181.4 977,175.5Z" fill="url(#ig)"/><circle cx="980.6" cy="175.4" r="1.25" fill="#3a3a3a"/><circle cx="983.6" cy="171" r="1.25" fill="#3a3a3a"/><circle cx="988.4" cy="169.6" r="1.25" fill="#3a3a3a"/><circle cx="992.8" cy="171.6" r="1.25" fill="#3a3a3a"/><circle cx="985" cy="178.2" r="1.25" fill="#3a3a3a"/>
<rect x="977.6" y="207.2" width="16.6" height="16.6" fill="#dedede"/><rect x="978.6" y="208.2" width="4.3" height="4.3" fill="#d8d8d8"/><rect x="983.8000000000001" y="208.2" width="4.3" height="4.3" fill="#9c9c9c"/><rect x="989.0" y="208.2" width="4.3" height="4.3" fill="#858585"/><rect x="978.6" y="213.39999999999998" width="4.3" height="4.3" fill="#a4a4a4"/><rect x="983.8000000000001" y="213.39999999999998" width="4.3" height="4.3" fill="#7e7e7e"/><rect x="989.0" y="213.39999999999998" width="4.3" height="4.3" fill="#666"/><rect x="978.6" y="218.6" width="4.3" height="4.3" fill="#6e6e6e"/><rect x="983.8000000000001" y="218.6" width="4.3" height="4.3" fill="#525252"/><rect x="989.0" y="218.6" width="4.3" height="4.3" fill="#333"/>
<path d="M984.8,248.8H991.6V250H990.8V264.2H989.2V250H987.6V264.2H986V257.6Q980.2,257.4 980.2,253.2Q980.2,249 984.8,248.8Z" fill="#dcdcdc"/>
<rect x="1007" y="68" width="270" height="18" fill="#3f3f3f"/><rect x="1007" y="86" width="270" height="1" fill="#2e2e2e"/><rect x="1007" y="68" width="55" height="19" fill="#535353"/><path d="M1062.5,68V86.5M1102.5,68V86" stroke="#2e2e2e"/><text x="1014" y="80" font-size="9.5" fill="#000" opacity=".35" font-family="Liberation Sans,sans-serif" font-weight="bold">Réglages</text><text x="1014" y="81" font-size="9.5" fill="#f2f2f2" stroke="#f2f2f2" stroke-width=".2" font-family="Liberation Sans,sans-serif" font-weight="bold">Réglages</text><text x="1069" y="80" font-size="9.5" fill="#000" opacity=".35" font-family="Liberation Sans,sans-serif" font-weight="bold">Styles</text><text x="1069" y="81" font-size="9.5" fill="#b4b4b4" stroke="#b4b4b4" stroke-width=".2" font-family="Liberation Sans,sans-serif" font-weight="bold">Styles</text><path d="M1259,76h5l-2.5,3z" fill="#d0d0d0"/><path d="M1265,75.5h8M1265,77.5h8M1265,79.5h8M1265,81.5h8" stroke="#d0d0d0" stroke-width="1"/><text x="1014.5" y="99.5" font-size="10" fill="#000" opacity=".35" font-family="Liberation Sans,sans-serif" font-weight="bold">Ajouter un réglage</text><text x="1014.5" y="100.5" font-size="10" fill="#f2f2f2" stroke="#f2f2f2" stroke-width=".2" font-family="Liberation Sans,sans-serif" font-weight="bold">Ajouter un réglage</text>
<circle cx="1093.4" cy="116.7" r="4.1" fill="#505050" stroke="#dcdcdc" stroke-width="1.3"/><path d="M1093.4,112.60000000000001A4.1,4.1 0 0 1 1093.4,120.8Z" fill="#dcdcdc"/><path d="M1099.6,116.7L1101.8,116.7M1097.8,121.1L1099.3,122.6M1093.4,122.9L1093.4,125.1M1089.0,121.1L1087.5,122.6M1087.2,116.7L1085.0,116.7M1089.0,112.3L1087.5,110.8M1093.4,110.5L1093.4,108.3M1097.8,112.3L1099.3,110.8" stroke="#dcdcdc" stroke-width="1.9"/><path d="M1109.70,119.7v-4M1111.34,119.7v-7.5M1112.98,119.7v-5M1114.62,119.7v-9.5M1116.26,119.7v-6M1117.90,119.7v-11M1119.54,119.7v-5.5M1121.18,119.7v-9.5M1122.82,119.7v-6.5M1124.46,119.7v-8M1126.10,119.7v-4.5" stroke="#dcdcdc" stroke-width="1.05"/><rect x="1108.9" y="118.3" width="18" height="3" fill="url(#ig)"/><path d="M1134.0,109.7h16" stroke="#2a2a2a" stroke-width="1" opacity=".75"/><rect x="1134.5" y="110.7" width="15" height="12" fill="#848484" stroke="#e2e2e2" stroke-width="1"/><path d="M1134.5,114.5h15M1134.5,118.9h15M1139.4,110.7v12M1144.6,110.7v12" stroke="#d4d4d4" stroke-width=".9"/><path d="M1135,122.3Q1140.5,121.7 1142,116.7T1149,111.10000000000001" fill="none" stroke="#f6f6f6" stroke-width="1.4"/><path d="M1158.2,109.7h16" stroke="#2a2a2a" stroke-width="1" opacity=".75"/><rect x="1158.7" y="110.7" width="15" height="12" fill="url(#ig)" stroke="#e2e2e2" stroke-width="1"/><path d="M1173.2,110.7V122.7H1159.2Z" fill="#4c4c4c"/><path d="M1160.8,114.10000000000001h3.6M1162.6000000000001,112.3v3.6" stroke="#333" stroke-width="1.1"/><path d="M1167.8,119.7h3.6" stroke="#e8e8e8" stroke-width="1.1"/><path d="M1182.5,110.3H1198.1L1190.3,124.10000000000001Z" fill="url(#rg)" stroke="#d8d8d8" stroke-width=".9"/><path d="M1182.3,109.7h16" stroke="#2a2a2a" stroke-width="1" opacity=".7"/><path d="M1074.1,136.3h16" stroke="#2a2a2a" stroke-width="1" opacity=".75"/><rect x="1074.6" y="137.3" width="15" height="12" fill="#b0b0b0" stroke="#e2e2e2" stroke-width="1"/><rect x="1075.1" y="137.8" width="14" height="4.6" fill="#cfcfcf"/><path d="M1076.8999999999999,137.8v4.6M1080.6999999999998,137.8v4.6M1084.6999999999998,137.8v4.6M1087.8999999999999,137.8v4.6" stroke="#8c8c8c" stroke-width="1.5"/><path d="M1074.6,142.70000000000002h15" stroke="#f0f0f0" stroke-width="1"/><rect x="1075.1" y="143.3" width="14" height="5.5" fill="url(#hgr)"/><path d="M1105.5,136.3v5M1099.5,138.70000000000002h12" stroke="#dcdcdc" stroke-width="1.6"/><rect x="1103.9" y="135.70000000000002" width="3.2" height="2.4" fill="#dcdcdc"/><path d="M1099.9,139.3l-2.8,7.4h5.6zM1111.1,139.3l-2.8,7.4h5.6z" fill="none" stroke="#dcdcdc" stroke-width="1"/><path d="M1096.7,146.70000000000002h6.4q-.4,3 -3.2,3t-3.2,-3zM1107.9,146.70000000000002h6.4q-.4,3 -3.2,3t-3.2,-3z" fill="#dcdcdc"/><path d="M1122.0,136.3h16" stroke="#2a2a2a" stroke-width="1" opacity=".75"/><rect x="1122.5" y="137.3" width="15" height="12" fill="url(#ig)" stroke="#e2e2e2" stroke-width="1"/><rect x="1123" y="137.8" width="6.4" height="11" fill="#4a4a4a"/><path d="M1145.7,138.3h3l1,-1.8h4l1,1.8h5v8h-14z" fill="url(#ig)"/><circle cx="1151.3" cy="141.70000000000002" r="2.4" fill="#555" stroke="#eee" stroke-width=".8"/><circle cx="1157.1000000000001" cy="146.5" r="4.6" fill="#a2a2a2" stroke="#e8e8e8" stroke-width="1"/><circle cx="1177.5" cy="140.70000000000002" r="4.4" fill="#e2e2e2"/><circle cx="1173.9" cy="145.9" r="4.4" fill="#cfcfcf"/><circle cx="1181.1" cy="145.9" r="4.4" fill="#bdbdbd"/><path d="M1175.1,143.3h4.8l-2.4,4z" fill="#333"/><path d="M1177.5,144.9v5.4" stroke="#444" stroke-width="1.2"/><path d="M1194.0,136.3h16" stroke="#2a2a2a" stroke-width="1" opacity=".75"/><rect x="1194.5" y="137.3" width="15" height="12" fill="#dedede" stroke="#e2e2e2" stroke-width="1"/><rect x="1195.0" y="137.9" width="4" height="3" fill="#c4c4c4"/><rect x="1199.8" y="137.9" width="4" height="3" fill="#9a9a9a"/><rect x="1204.6" y="137.9" width="4" height="3" fill="#7e7e7e"/><rect x="1195.0" y="141.70000000000002" width="4" height="3" fill="#9a9a9a"/><rect x="1199.8" y="141.70000000000002" width="4" height="3" fill="#7e7e7e"/><rect x="1204.6" y="141.70000000000002" width="4" height="3" fill="#5c5c5c"/><rect x="1195.0" y="145.5" width="4" height="3" fill="#7e7e7e"/><rect x="1199.8" y="145.5" width="4" height="3" fill="#5c5c5c"/><rect x="1204.6" y="145.5" width="4" height="3" fill="#3e3e3e"/><path d="M1086.0,163.4h16" stroke="#2a2a2a" stroke-width="1" opacity=".75"/><rect x="1086.5" y="164.4" width="15" height="12" fill="url(#ig)" stroke="#e2e2e2" stroke-width="1"/><ellipse cx="1094" cy="170.4" rx="5.6" ry="3.4" transform="rotate(-35 1094 170.4)" fill="#555"/><path d="M1087,176.4L1101,164.4" stroke="#eee" stroke-width="1"/><path d="M1109.9,163.4h16" stroke="#2a2a2a" stroke-width="1" opacity=".75"/><rect x="1110.4" y="164.4" width="15" height="12" fill="url(#dg2)" stroke="#e2e2e2" stroke-width="1"/><path d="M1110.9,172.4L1120.9,164.4M1114.9,176.4L1124.9,168.4" stroke="#777" stroke-width="2.2" opacity=".7"/><path d="M1134.0,163.4h16" stroke="#2a2a2a" stroke-width="1" opacity=".75"/><rect x="1134.5" y="164.4" width="15" height="12" fill="url(#ig)" stroke="#e2e2e2" stroke-width="1"/><path d="M1135,175.9v-3h3.4v-2.6h3.4v-2.6h3.6v-2.6h3.6v3h-3.4v2.6h-3.4v2.6h-3.6v2.6z" fill="#3c3c3c"/><path d="M1158.2,163.4h16" stroke="#2a2a2a" stroke-width="1" opacity=".75"/><rect x="1158.7" y="164.4" width="15" height="12" fill="#e4e4e4" stroke="#e2e2e2" stroke-width="1"/><path d="M1159.2,164.9L1166.2,170.4L1159.2,175.9ZM1173.2,164.9L1166.2,170.4L1173.2,175.9Z" fill="#7c7c7c"/><path d="M1182.3,163.4h16" stroke="#2a2a2a" stroke-width="1" opacity=".75"/><rect x="1182.8" y="164.4" width="15" height="12" fill="url(#hgr)" stroke="#e2e2e2" stroke-width="1"/><defs><linearGradient id="hgr" x1="0" y1="0" x2="1" y2="0"><stop offset="0" stop-color="#4e4e4e"/><stop offset="1" stop-color="#e6e6e6"/></linearGradient></defs>
<rect x="1007" y="186.5" width="270" height="2.5" fill="#2b2b2b"/><rect x="1007" y="189" width="270" height="18" fill="#3f3f3f"/><rect x="1007" y="207" width="270" height="1" fill="#2e2e2e"/><rect x="1007" y="189" width="50" height="19" fill="#535353"/><path d="M1057.5,189V207.5M1109.5,189V207M1154.5,189V207" stroke="#2e2e2e"/><text x="1014" y="201" font-size="9.5" fill="#000" opacity=".35" font-family="Liberation Sans,sans-serif" font-weight="bold">Calques</text><text x="1014" y="202" font-size="9.5" fill="#f2f2f2" stroke="#f2f2f2" stroke-width=".2" font-family="Liberation Sans,sans-serif" font-weight="bold">Calques</text><text x="1064" y="201" font-size="9.5" fill="#000" opacity=".35" font-family="Liberation Sans,sans-serif" font-weight="bold">Couches</text><text x="1064" y="202" font-size="9.5" fill="#b4b4b4" stroke="#b4b4b4" stroke-width=".2" font-family="Liberation Sans,sans-serif" font-weight="bold">Couches</text><text x="1117" y="201" font-size="9.5" fill="#000" opacity=".35" font-family="Liberation Sans,sans-serif" font-weight="bold">Tracés</text><text x="1117" y="202" font-size="9.5" fill="#b4b4b4" stroke="#b4b4b4" stroke-width=".2" font-family="Liberation Sans,sans-serif" font-weight="bold">Tracés</text><path d="M1259,196h5l-2.5,3z" fill="#d0d0d0"/><path d="M1265,195.5h8M1265,197.5h8M1265,199.5h8M1265,201.5h8" stroke="#d0d0d0" stroke-width="1"/>
<rect x="1012.5" y="213.5" width="102" height="16" rx="3" fill="none" stroke="#6a6a6a" stroke-width="1"/><rect x="1012.5" y="212.5" width="102" height="16" rx="3" fill="url(#dg)" stroke="#2b2b2b" stroke-width="1"/><path d="M1013.5,213.5h100" stroke="#8a8a8a" stroke-width="1" opacity=".7"/><path d="M1104,219l3,-4l3,4zM1104,222l3,4l3,-4z" fill="#e6e6e6"/><circle cx="1024.6" cy="219.6" r="3.3" fill="none" stroke="#e4e4e4" stroke-width="1.4"/><path d="M1022.2,222.2L1019.4,225.4" stroke="#e4e4e4" stroke-width="1.8" stroke-linecap="round"/><text x="1032" y="223.4" font-size="10" fill="#000" opacity=".35" font-family="Liberation Sans,sans-serif">Type</text><text x="1032" y="224.4" font-size="10" fill="#ececec" stroke="#ececec" stroke-width=".2" font-family="Liberation Sans,sans-serif">Type</text><rect x="1134.5" y="215.5" width="12.6" height="10" fill="none" stroke="#dcdcdc" stroke-width="1.1"/><path d="M1136,224.6l2.8,-3.6l2,2l1.6,-1.4l3,3z" fill="#dcdcdc"/><circle cx="1143.6" cy="218.6" r="1.1" fill="#dcdcdc"/><circle cx="1164.3" cy="220.6" r="5" fill="#4a4a4a" stroke="#dcdcdc" stroke-width="1.2"/><path d="M1160.8,224.2A5,5 0 0 1 1167.9,217Z" fill="#dcdcdc"/><text x="1188" y="225" text-anchor="middle" font-size="16.5" fill="#dcdcdc" font-family="Liberation Serif,serif" font-weight="bold">T</text><rect x="1208.4" y="216.2" width="8.6" height="8.2" fill="none" stroke="#dcdcdc" stroke-width="1.2"/><rect x="1207.1000000000001" y="214.89999999999998" width="2.6" height="2.6" rx=".6" fill="#535353" stroke="#dcdcdc" stroke-width=".9"/><rect x="1215.7" y="214.89999999999998" width="2.6" height="2.6" rx=".6" fill="#535353" stroke="#dcdcdc" stroke-width=".9"/><rect x="1207.1000000000001" y="223.1" width="2.6" height="2.6" rx=".6" fill="#535353" stroke="#dcdcdc" stroke-width=".9"/><rect x="1215.7" y="223.1" width="2.6" height="2.6" rx=".6" fill="#535353" stroke="#dcdcdc" stroke-width=".9"/><path d="M1234.4,215.4H1239.2L1241.6,217.8V226H1234.4Z" fill="none" stroke="#dcdcdc" stroke-width="1.1"/><path d="M1239,215.4V218H1241.6" fill="none" stroke="#dcdcdc" stroke-width=".9"/><rect x="1230.2" y="220.4" width="6" height="5.8" fill="#dcdcdc"/><rect x="1264" y="212" width="8.6" height="17" rx="1" fill="#353535" stroke="#2a2a2a" stroke-width="1"/><rect x="1264.6" y="212.6" width="7.4" height="7.6" fill="url(#dg)"/><rect x="1264.6" y="212.6" width="7.4" height="1" fill="#999"/>
<path d="M1007,234.5H1277" stroke="#3c3c3c"/><path d="M1007,235.5H1277" stroke="#606060"/><rect x="1012.5" y="242.5" width="159" height="16" rx="3" fill="none" stroke="#6a6a6a" stroke-width="1"/><rect x="1012.5" y="241.5" width="159" height="16" rx="3" fill="url(#dg)" stroke="#2b2b2b" stroke-width="1"/><path d="M1013.5,242.5h157" stroke="#8a8a8a" stroke-width="1" opacity=".7"/><path d="M1161,248l3,-4l3,4zM1161,251l3,4l3,-4z" fill="#e6e6e6"/><text x="1018" y="252.4" font-size="10" fill="#000" opacity=".35" font-family="Liberation Sans,sans-serif">Normal</text><text x="1018" y="253.4" font-size="10" fill="#ececec" stroke="#ececec" stroke-width=".2" font-family="Liberation Sans,sans-serif">Normal</text><text x="1176.5" y="252.4" font-size="10" fill="#000" opacity=".35" font-family="Liberation Sans,sans-serif">Opacité :</text><text x="1176.5" y="253.4" font-size="10" fill="#ececec" stroke="#ececec" stroke-width=".2" font-family="Liberation Sans,sans-serif">Opacité :</text><rect x="1220.5" y="242.5" width="52" height="16" rx="2" fill="none" stroke="#686868" stroke-width="1"/><rect x="1220.5" y="241.5" width="52" height="16" rx="2" fill="#3a3a3a" stroke="#2a2a2a" stroke-width="1"/><path d="M1257,242h13q2,0 2,2v11q0,2 -2,2h-13z" fill="url(#dg)"/><path d="M1256.5,242v15" stroke="#2a2a2a"/><path d="M1261.5,248h7l-3.5,4z" fill="#e8e8e8"/><text x="1224" y="252.4" font-size="10" fill="#000" opacity=".35" font-family="Liberation Sans,sans-serif">100 %</text><text x="1224" y="253.4" font-size="10" fill="#ececec" stroke="#ececec" stroke-width=".2" font-family="Liberation Sans,sans-serif">100 %</text><path d="M1007,263.5H1277" stroke="#3c3c3c"/><path d="M1007,264.5H1277" stroke="#606060"/>
<text x="1011.5" y="280.4" font-size="10" fill="#000" opacity=".35" font-family="Liberation Sans,sans-serif">Verrou :</text><text x="1011.5" y="281.4" font-size="10" fill="#ececec" stroke="#ececec" stroke-width=".2" font-family="Liberation Sans,sans-serif">Verrou :</text><path d="M1053,271.2h11.4" stroke="#2c2c2c" stroke-width="1" opacity=".7"/><rect x="1053" y="271.7" width="11.4" height="11.4" fill="#dedede"/><rect x="1054.0" y="272.7" width="2.6" height="2.6" fill="#8c8c8c"/><rect x="1060.8" y="272.7" width="2.6" height="2.6" fill="#8c8c8c"/><rect x="1057.4" y="276.09999999999997" width="2.6" height="2.6" fill="#8c8c8c"/><rect x="1054.0" y="279.5" width="2.6" height="2.6" fill="#8c8c8c"/><rect x="1060.8" y="279.5" width="2.6" height="2.6" fill="#8c8c8c"/><path d="M1088.4,270L1081.8,278" stroke="#dedede" stroke-width="2.3" stroke-linecap="round"/><path d="M1082.6,277.2q2,2.4 -.4,4.4q-3.4,1.8 -9,.2q4.2,-1 5.8,-4.4q1.6,-1.4 3.6,-.2z" fill="#dedede"/><path d="M1102.3,271.4v10.2M1097.2,276.5h10.2" stroke="#dedede" stroke-width="1.3"/><path d="M1102.3,269l3,3.8h-6zM1102.3,284l3,-3.8h-6zM1095.2,276.5l3.6,-3v6zM1109.4,276.5l-3.6,-3v6z" fill="#dedede"/><path d="M1100.2,274.4h1.2v1.2h-1.2zM1103.2,274.4h1.2v1.2h-1.2zM1100.2,277.4h1.2v1.2h-1.2zM1103.2,277.4h1.2v1.2h-1.2z" fill="#333"/><rect x="1119.8" y="274.8" width="10.2" height="8.4" rx=".8" fill="url(#ig)"/><path d="M1122.2,275v-2a2.7,2.7 0 0 1 5.4,0v2" fill="none" stroke="#dedede" stroke-width="1.7"/><rect x="1124.1" y="277.6" width="1.7" height="3.2" fill="#333"/><text x="1188.5" y="280.4" font-size="10" fill="#000" opacity=".35" font-family="Liberation Sans,sans-serif">Fond :</text><text x="1188.5" y="281.4" font-size="10" fill="#ececec" stroke="#ececec" stroke-width=".2" font-family="Liberation Sans,sans-serif">Fond :</text><rect x="1220.5" y="270.5" width="52" height="16" rx="2" fill="none" stroke="#686868" stroke-width="1"/><rect x="1220.5" y="269.5" width="52" height="16" rx="2" fill="#3a3a3a" stroke="#2a2a2a" stroke-width="1"/><path d="M1257,270h13q2,0 2,2v11q0,2 -2,2h-13z" fill="url(#dg)"/><path d="M1256.5,270v15" stroke="#2a2a2a"/><path d="M1261.5,276h7l-3.5,4z" fill="#e8e8e8"/><text x="1224" y="280.4" font-size="10" fill="#000" opacity=".35" font-family="Liberation Sans,sans-serif">100 %</text><text x="1224" y="281.4" font-size="10" fill="#ececec" stroke="#ececec" stroke-width=".2" font-family="Liberation Sans,sans-serif">100 %</text>
<rect x="1007" y="291" width="270" height="1.5" fill="#323232"/><rect x="1007" y="292.5" width="255" height="435" fill="#454545"/><rect x="1262" y="292.5" width="15" height="435" fill="url(#sg)"/><rect x="1007" y="293" width="255" height="38" fill="#535353"/><rect x="1038" y="293" width="224" height="38" fill="#6b7c93"/><rect x="1007" y="331" width="255" height="1" fill="#3a3a3a"/><rect x="1007" y="332" width="255" height="39" fill="#535353"/><rect x="1007" y="371" width="255" height="1" fill="#3a3a3a"/><path d="M1037.5,293V371" stroke="#3d3d3d"/>
<path d="M1015.2,312.4Q1022,304.0 1028.8,312.4Q1022,320.4 1015.2,312.4Z" fill="#d8d8d8"/><circle cx="1022" cy="312.09999999999997" r="3.2" fill="#454545"/><circle cx="1022" cy="312.09999999999997" r="1.7" fill="#e0e0e0"/><circle cx="1022" cy="312.09999999999997" r=".7" fill="#555"/><path d="M1015.2,351.2Q1022,342.8 1028.8,351.2Q1022,359.2 1015.2,351.2Z" fill="#d8d8d8"/><circle cx="1022" cy="350.9" r="3.2" fill="#454545"/><circle cx="1022" cy="350.9" r="1.7" fill="#e0e0e0"/><circle cx="1022" cy="350.9" r=".7" fill="#555"/><rect x="1039.5" y="294.5" width="35" height="35" fill="none" stroke="#f6f6f6" stroke-width="1"/><rect x="1050.8" y="293" width="13" height="38" fill="#6b7c93"/><rect x="1038" y="304.4" width="38" height="14.6" fill="#6b7c93"/><rect x="1041.5" y="296.5" width="31" height="31" fill="#fff" stroke="#222" stroke-width="1"/><clipPath id="tc"><rect x="1042" y="297" width="30" height="30"/></clipPath><g clip-path="url(#tc)"><g transform="translate(1042 297) scale(0.07353) translate(-277 -207)"><path d="M240.0,378.7C244.2,363.4 258.5,378.7 265.0,378.7C271.5,378.7 274.8,378.7 279.0,378.7C283.2,378.7 287.1,378.2 290.5,378.7C293.9,379.2 295.9,381.2 299.3,381.6C302.7,382.0 308.1,382.0 311.0,381.0C313.9,380.0 314.7,377.8 316.9,375.8C319.1,373.9 321.5,370.5 324.2,369.3C326.9,368.1 329.9,368.8 333.0,368.5C336.1,368.2 339.5,368.1 343.0,367.4C346.5,366.6 332.8,365.2 354.0,364.0C375.2,362.8 444.0,351.5 470.0,360.0C496.0,368.5 504.7,403.8 510.0,415.0C515.3,426.2 505.3,422.5 502.0,427.3C498.7,432.1 494.5,439.2 490.0,443.9C485.5,448.6 482.4,450.8 475.0,455.7C467.6,460.6 453.6,467.8 445.8,473.2C438.0,478.6 432.6,483.5 428.2,487.9C423.8,492.3 421.0,495.2 419.4,499.6C417.8,504.0 416.9,509.3 418.8,514.2C420.8,519.1 428.8,521.6 431.1,528.9C433.4,536.2 432.6,550.4 432.6,558.2C432.6,566.0 432.3,572.1 431.1,575.8C429.9,579.5 427.2,580.2 425.3,580.2C423.4,580.2 421.4,577.0 419.4,575.8C417.4,574.6 418.1,573.5 413.5,572.8C408.9,572.1 395.5,572.1 391.6,571.4C387.7,570.7 389.1,569.6 390.1,568.4C391.1,567.2 396.2,565.7 397.4,564.0C398.6,562.3 399.1,560.2 397.4,558.2C395.7,556.2 388.9,554.5 387.2,552.3C385.5,550.1 388.4,546.5 387.2,545.0C386.0,543.5 382.8,543.0 379.9,543.5C377.0,544.0 374.7,547.4 369.6,547.9C364.5,548.4 354.5,545.8 349.1,546.5C343.7,547.2 341.3,551.3 337.4,552.3C333.5,553.3 328.1,550.3 325.7,552.3C323.2,554.2 324.7,560.1 322.7,564.0C320.7,567.9 317.5,572.4 313.9,575.8C310.2,579.2 301.8,581.7 300.8,584.6C299.8,587.5 304.7,590.9 308.1,593.3C311.5,595.7 319.6,596.8 321.3,599.2C323.0,601.7 320.5,605.8 318.3,608.0C316.1,610.2 313.2,611.4 308.1,612.4C303.0,613.4 291.3,617.6 287.6,613.9C283.9,610.2 286.8,598.7 286.1,590.4C285.4,582.1 283.7,572.8 283.2,564.0C282.7,555.2 281.5,545.0 283.2,537.7C284.9,530.4 289.7,525.0 293.4,520.1C297.1,515.2 301.8,512.3 305.2,508.4C308.6,504.5 311.0,499.2 313.9,496.7C316.8,494.2 319.8,492.7 322.7,493.2C325.6,493.7 328.6,497.6 331.5,499.6C334.4,501.7 337.9,505.5 340.3,505.5C342.7,505.5 344.7,502.5 345.6,499.6C346.5,496.7 346.7,491.3 345.6,487.9C344.5,484.5 342.1,481.6 338.8,479.1C335.5,476.7 331.3,474.7 325.7,473.2C320.1,471.7 311.5,470.5 305.2,470.3C298.9,470.1 292.3,471.8 287.6,471.8C282.9,471.9 280.8,470.9 277.0,470.6C273.2,470.4 271.2,470.4 265.0,470.3C258.8,470.2 244.2,485.6 240.0,470.3C235.8,455.0 235.8,394.0 240.0,378.7Z" fill="#8a8a8a"/><path d="M333.9,290.2C334.8,288.5 340.5,287.2 342.6,289.3C344.8,291.4 344.7,298.4 346.8,302.5C348.9,306.6 352.2,312.0 355.0,314.2C357.8,316.4 360.8,313.8 363.7,315.7C366.6,317.6 369.6,323.9 372.5,325.4C375.4,326.9 377.4,325.9 381.3,324.5C385.2,323.1 391.1,318.9 396.0,317.2C400.9,315.5 407.2,315.7 410.6,314.2C414.0,312.7 413.6,310.3 416.5,308.4C419.4,306.4 424.8,302.2 428.2,302.5C431.6,302.8 432.1,309.6 437.0,309.9C441.9,310.1 450.2,305.2 457.5,304.0C464.8,302.8 476.4,302.8 480.9,302.5C485.4,302.2 482.5,301.1 484.6,302.5C486.7,303.9 489.0,308.8 493.4,310.7C497.8,312.6 505.1,312.1 511.0,314.2C516.9,316.2 523.2,320.8 528.6,323.0C534.0,325.2 538.8,324.0 543.2,327.4C547.6,330.8 551.6,339.8 555.0,343.5C558.4,347.2 561.3,348.7 563.7,349.4C566.1,350.1 567.6,349.1 569.6,347.9C571.6,346.7 572.8,343.8 575.5,342.1C578.2,340.4 583.8,340.4 585.7,337.7C587.7,335.0 586.0,329.7 587.2,326.0C588.4,322.3 590.6,318.9 593.0,315.7C595.4,312.5 598.4,310.6 601.8,306.9C605.2,303.2 608.9,296.3 613.5,293.7C618.1,291.1 626.9,292.4 629.7,291.4C632.5,290.4 629.0,290.4 630.5,287.9C632.0,285.4 636.6,279.4 638.4,276.2C640.2,273.0 641.5,271.0 641.4,268.8C641.3,266.6 638.2,265.4 637.6,263.0C637.0,260.6 637.0,256.1 637.6,254.2C638.2,252.2 638.8,251.9 641.4,251.3C644.0,250.7 650.9,251.1 653.1,250.4C655.3,249.7 654.3,249.2 654.6,246.9C654.9,244.6 654.4,238.8 655.1,236.6C655.8,234.4 656.3,234.2 658.9,233.7C661.5,233.2 668.0,232.7 670.7,233.7C673.4,234.7 674.0,236.6 675.1,239.5C676.2,242.4 677.4,248.8 677.4,251.3C677.4,253.9 677.0,253.8 675.1,254.8C673.2,255.8 669.2,256.7 666.3,257.1C663.4,257.5 659.5,256.9 657.5,257.1C655.5,257.4 655.0,256.9 654.0,258.6C653.0,260.3 653.0,264.7 651.6,267.4C650.2,270.1 648.0,272.5 645.8,274.7C643.6,276.9 640.6,278.4 638.4,280.6C636.2,282.8 633.8,285.9 632.6,287.9C631.4,289.8 630.6,290.8 631.1,292.3C631.6,293.8 634.0,295.0 635.5,296.7C637.0,298.4 639.2,300.8 639.9,302.5C640.6,304.2 638.7,305.5 639.9,306.9C641.1,308.3 647.2,310.7 647.2,310.7C647.2,310.7 646.7,313.0 645.2,313.7C643.7,314.4 640.3,313.7 638.4,314.8C636.5,315.9 636.7,318.2 634.0,320.1C631.3,322.0 624.8,324.1 622.3,326.0C619.8,327.9 619.9,328.2 618.8,331.8C617.7,335.4 615.3,343.5 615.9,347.9C616.5,352.3 619.8,354.5 622.3,358.2C624.8,361.9 628.2,366.0 631.1,369.9C634.0,373.8 639.9,381.6 639.9,381.6C639.9,381.6 637.9,383.7 634.0,385.1C630.1,386.5 624.3,387.8 616.5,389.8C608.7,391.8 597.0,394.8 587.2,396.9C577.4,398.9 567.7,399.3 557.9,402.1C548.1,404.9 537.8,409.6 528.6,413.9C519.5,418.1 503.0,427.6 503.0,427.6C503.0,427.6 487.1,422.3 481.0,419.5C474.9,416.7 466.3,410.9 466.3,410.9C466.3,410.9 470.9,405.5 472.1,402.1C473.3,398.7 474.1,394.8 473.6,390.4C473.1,386.0 471.4,379.9 469.2,375.8C467.0,371.7 463.1,367.2 460.4,365.5C457.7,363.8 455.1,364.3 453.1,365.5C451.2,366.7 449.9,370.9 448.7,372.8C447.5,374.8 448.8,376.2 445.8,377.2C442.9,378.2 436.9,378.3 431.0,378.7C425.1,379.1 416.9,379.8 410.6,379.3C404.3,378.8 399.4,376.5 393.0,375.8C386.6,375.1 378.4,375.9 372.5,374.9C366.6,373.9 363.0,370.9 357.9,369.9C352.8,368.8 346.0,368.9 342.0,368.6C338.0,368.3 334.6,368.6 334.0,368.2C333.4,367.8 337.0,367.7 338.5,366.4C340.0,365.1 340.9,362.4 343.2,360.5C345.4,358.6 349.8,358.1 352.0,355.3C354.2,352.5 356.1,346.7 356.4,343.5C356.6,340.3 356.2,338.6 353.5,336.2C350.8,333.8 345.2,331.6 340.3,328.9C335.4,326.2 324.2,320.1 324.2,320.1C324.2,320.1 333.7,311.8 335.9,308.4C338.1,305.0 337.7,302.6 337.4,299.6C337.1,296.6 333.0,291.9 333.9,290.2Z" fill="#000" stroke="#000" stroke-width="2"/></g></g><rect x="1041.5" y="335.5" width="31" height="31" fill="#3a3028" stroke="#1a1a1a" stroke-width="1"/><clipPath id="pc"><rect x="1042" y="336" width="30" height="30"/></clipPath><g clip-path="url(#pc)"><path d="M1042,336h30v13l-4,2l-5,-1l-6,1.5l-7,-1l-5,1.5l-3,-1z" fill="#e9e6e2"/><path d="M1042,336h30v9l-2,-1.5l-2,2l-2.5,-3l-2,1l-2,-2l-3,1.5l-2,-1l-2.5,2.5l-2,-2l-3,1l-2,2.5l-1.500,-1.500l-1.500,3z" fill="#232c22"/><path d="M1042,342l3,2l2,4l-2,3l-3,1zM1072,341l-3,3l-1,4l2,3l2,1z" fill="#2c3628"/><rect x="1051.6" y="337.7" width="1.8" height="1" fill="#f1efe9" opacity="0.7"/><rect x="1065.5" y="337.3" width="1.8" height="1" fill="#f1efe9" opacity="1"/><rect x="1048.5" y="337.2" width="1.4" height="1" fill="#f1efe9" opacity="0.7"/><rect x="1045.0" y="339.9" width="1.8" height="1" fill="#f1efe9" opacity="0.7"/><rect x="1060.2" y="341.2" width="1" height="1.6" fill="#f1efe9" opacity="1"/><rect x="1053.6" y="344.3" width="1" height="1.6" fill="#f1efe9" opacity="0.7"/><rect x="1050.6" y="337.7" width="1" height="1.6" fill="#f1efe9" opacity="0.85"/><rect x="1058.2" y="342.0" width="1" height="1.6" fill="#f1efe9" opacity="1"/><rect x="1060.4" y="339.5" width="1.8" height="1.6" fill="#f1efe9" opacity="0.7"/><rect x="1058.3" y="341.5" width="1.4" height="1.6" fill="#f1efe9" opacity="1"/><rect x="1054.5" y="339.0" width="1.8" height="1.2" fill="#f1efe9" opacity="0.85"/><rect x="1050.9" y="342.9" width="1.8" height="1" fill="#f1efe9" opacity="0.7"/><rect x="1058.6" y="340.7" width="1.4" height="1.6" fill="#f1efe9" opacity="0.85"/><rect x="1050.6" y="344.3" width="1" height="1.6" fill="#f1efe9" opacity="0.85"/><rect x="1047.1" y="339.2" width="1.4" height="1.2" fill="#f1efe9" opacity="0.7"/><rect x="1069.4" y="337.1" width="1.8" height="1.6" fill="#f1efe9" opacity="0.85"/><rect x="1052.0" y="339.3" width="1.4" height="1.6" fill="#f1efe9" opacity="0.85"/><rect x="1044.4" y="337.2" width="1.4" height="1.2" fill="#f1efe9" opacity="1"/><rect x="1061.1" y="337.0" width="1.8" height="1.2" fill="#f1efe9" opacity="1"/><rect x="1058.7" y="341.9" width="1.4" height="1.2" fill="#f1efe9" opacity="1"/><rect x="1053.3" y="341.8" width="1" height="1.2" fill="#f1efe9" opacity="0.85"/><rect x="1047.2" y="337.4" width="1" height="1" fill="#f1efe9" opacity="0.85"/><rect x="1046.1" y="338.5" width="1.4" height="1.2" fill="#f1efe9" opacity="0.7"/><rect x="1047.2" y="339.7" width="1.4" height="1" fill="#f1efe9" opacity="0.85"/><rect x="1066.7" y="338.7" width="1.4" height="1.2" fill="#f1efe9" opacity="1"/><rect x="1067.3" y="344.2" width="1" height="1" fill="#f1efe9" opacity="0.7"/><rect x="1046.7" y="341.8" width="1" height="1.2" fill="#f1efe9" opacity="1"/><rect x="1047.6" y="338.8" width="1" height="1.2" fill="#f1efe9" opacity="1"/><rect x="1052.8" y="341.0" width="1" height="1.6" fill="#f1efe9" opacity="1"/><rect x="1069.1" y="341.7" width="1.8" height="1" fill="#f1efe9" opacity="0.85"/><rect x="1067.7" y="342.7" width="1.8" height="1.6" fill="#f1efe9" opacity="0.85"/><rect x="1053.6" y="339.7" width="1.4" height="1.6" fill="#f1efe9" opacity="0.85"/><rect x="1044.2" y="337.0" width="1" height="1.2" fill="#f1efe9" opacity="0.7"/><rect x="1045.6" y="341.3" width="1" height="1" fill="#f1efe9" opacity="1"/><rect x="1042" y="350" width="13" height="16" fill="#5f4434"/><rect x="1043" y="349" width="11" height="2" fill="#7a5a46"/><rect x="1054" y="351" width="11" height="15" fill="#a67860"/><rect x="1056" y="353" width="6" height="8" fill="#c49a80"/><rect x="1064" y="350" width="8" height="16" fill="#4a3a30"/><rect x="1062" y="349.5" width="10" height="2.500" fill="#6b5040"/><rect x="1054.5" y="350" width="1.6" height="9" fill="#a8321e"/><rect x="1056" y="354" width="1.2" height="5" fill="#c4482c"/><rect x="1059" y="351.5" width="4" height="1.4" fill="#c87038"/><rect x="1044" y="353" width="1.8" height="2.400" fill="#2e221c"/><rect x="1048" y="353" width="1.8" height="2.400" fill="#2e221c"/><rect x="1051.5" y="355" width="1.8" height="2.400" fill="#8a6a50"/><rect x="1045" y="357" width="1.8" height="2.400" fill="#3a2a22"/><rect x="1066" y="354" width="1.8" height="2.400" fill="#2a221e"/><rect x="1069" y="356" width="1.8" height="2.400" fill="#5c86a8"/><rect x="1067" y="359" width="1.8" height="2.400" fill="#6a94b0"/><rect x="1058" y="358" width="1.8" height="2.400" fill="#7a4a38"/><rect x="1061" y="360" width="1.8" height="2.400" fill="#e8d8c8"/><rect x="1057" y="362" width="1.8" height="2.400" fill="#4a342a"/><path d="M1042,356l2,1l1.5,-2l2,3l2,-1l1,3l-2,3l2,3h-8.500z" fill="#3e5434"/><rect x="1046" y="362" width="3" height="2" fill="#5f7c4c"/><rect x="1051" y="363.5" width="21" height="2.500" fill="#2a2420"/><rect x="1055" y="361" width="5" height="3" fill="#8a6a58"/></g>
<text x="1081" y="317.2" font-size="10" fill="#000" opacity=".35" font-family="Liberation Sans,sans-serif">Groupe 1</text><text x="1081" y="318.2" font-size="10" fill="#f4f4f4" stroke="#f4f4f4" stroke-width=".2" font-family="Liberation Sans,sans-serif">Groupe 1</text><text x="1081" y="356.2" font-size="10" fill="#000" opacity=".35" font-family="Liberation Sans,sans-serif">Arrière-plan</text><text x="1081" y="357.2" font-size="10" fill="#f4f4f4" stroke="#f4f4f4" stroke-width=".2" font-family="Liberation Sans,sans-serif">Arrière-plan</text><rect x="1235.4" y="349.4" width="9.2" height="7.2" rx=".8" fill="#6c6c6c" stroke="#dcdcdc" stroke-width="1.2"/><path d="M1237.6,349.2v-1.800a2.400,2.400 0 0 1 4.800,0v1.800" fill="none" stroke="#d8d8d8" stroke-width="1.3"/><rect x="1239.2" y="351.6" width="1.600" height="2.800" fill="#e4e4e4"/>
<rect x="1007" y="727" width="270" height="1" fill="#3a3a3a"/><rect x="1007" y="728" width="270" height="19" fill="#535353"/><rect x="1074.6" y="734.3" width="8" height="6" rx="3" fill="none" stroke="#a8a8a8" stroke-width="1.6"/><rect x="1080.4" y="734.3" width="8" height="6" rx="3" fill="none" stroke="#a8a8a8" stroke-width="1.6"/><path d="M1078.6,737.3h5.8" stroke="#a8a8a8" stroke-width="1.6"/><text x="1102" y="741.9" font-size="14" font-style="italic" fill="#cfcfcf" font-family="Liberation Sans,sans-serif">fx</text><path d="M1116.4,741.6999999999999h3l-1.5,2z" fill="#cfcfcf"/><rect x="1128.8" y="732.6999999999999" width="13.4" height="9.6" fill="#cfcfcf"/><circle cx="1135.5" cy="737.5" r="2.5" fill="#444"/><circle cx="1161.6" cy="737.3" r="5" fill="#4a4a4a" stroke="#cfcfcf" stroke-width="1.3"/><path d="M1158,740.9A5,5 0 0 1 1165.2,733.6999999999999Z" fill="#cfcfcf"/><path d="M1168.4,741.6999999999999h3l-1.5,2z" fill="#cfcfcf"/><path d="M1183,731.9h5l1.2,1.6h6.8v8.4h-13z" fill="#cfcfcf"/><path d="M1210.2,732.5h11.2v10h-7.6v-6.4h-3.6z" fill="#cfcfcf"/><path d="M1210.4,736.9h3v3z" fill="#cfcfcf"/><path d="M1237.4,734.5h10.4M1240.6,733.9v-1.6h4v1.6" fill="none" stroke="#cfcfcf" stroke-width="1.3"/><path d="M1238.2,735.6999999999999h8.8l-.8,7h-7.2z" fill="#cfcfcf"/><path d="M1240.6,736.6999999999999v5M1242.6,736.6999999999999v5M1244.6,736.6999999999999v5" stroke="#555" stroke-width=".8"/></svg><!--RIGHT:e-->
<div id="botline" class="a"></div>
</body>
</html>
